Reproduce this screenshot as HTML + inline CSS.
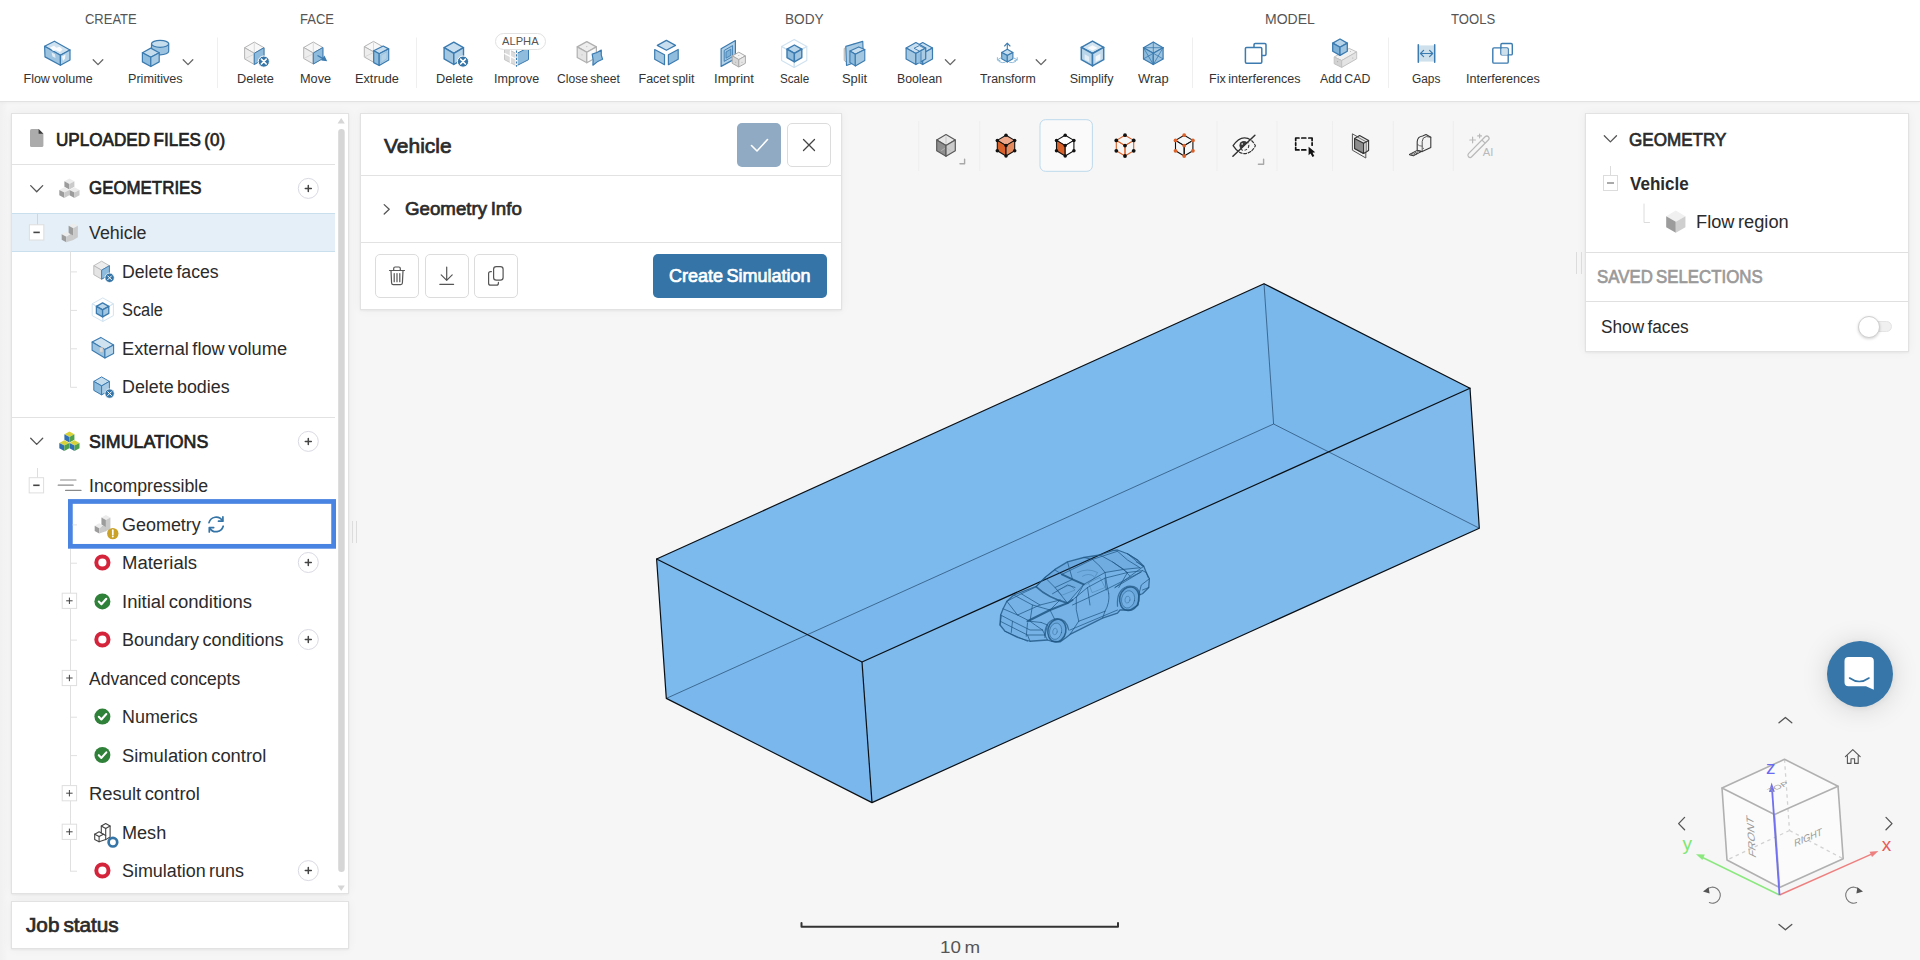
<!DOCTYPE html>
<html lang="en"><head><meta charset="utf-8"><title>SimScale Workbench</title>
<style>
*{box-sizing:border-box}
html,body{margin:0;padding:0}
body{width:1920px;height:960px;overflow:hidden;background:#f6f6f6;font-family:"Liberation Sans",sans-serif;position:relative;color:#2b2b2b}
.abs{position:absolute}
svg.lay{position:absolute;left:0;top:0;width:1920px;height:960px;overflow:visible;pointer-events:none}
.t{position:absolute;white-space:nowrap;transform-origin:0 50%;display:block;word-spacing:-.085em}
.panel{position:absolute;background:#fff;border:1px solid #e2e2e2;box-shadow:0 0 10px rgba(0,0,0,.045),0 1px 2px rgba(0,0,0,.05)}
</style></head><body>
<svg class="lay" viewBox="0 0 1920 960">
<polygon points="656.6,559 1264,283.7 1470,388.2 1479.3,528.2 872,802.6 666.3,698.4" fill="#7ebaec" stroke="none" stroke-width="1" stroke-linejoin="round" />
<polygon points="666.3,698.4 872,802.6 1479.3,528.2 1273.6,424" fill="rgba(100,170,236,0.16)" stroke="none" stroke-width="1" stroke-linejoin="round" />
<polygon points="1264,283.7 1470,388.2 1479.3,528.2 1273.6,424" fill="rgba(100,170,236,0.14)" stroke="none" stroke-width="1" stroke-linejoin="round" />
<polygon points="656.6,559 1264,283.7 1273.6,424 666.3,698.4" fill="rgba(100,170,236,0.06)" stroke="none" stroke-width="1" stroke-linejoin="round" />
<polygon points="862,662 1470,388.2 1479.3,528.2 872,802.6" fill="rgba(255,255,255,0.05)" stroke="none" stroke-width="1" stroke-linejoin="round" />
<line x1="1264" y1="283.7" x2="1273.6" y2="424" stroke="#1f4468" stroke-width="0.8" stroke-opacity="0.85"/>
<line x1="1273.6" y1="424" x2="666.3" y2="698.4" stroke="#1f4468" stroke-width="0.8" stroke-opacity="0.85"/>
<line x1="1273.6" y1="424" x2="1479.3" y2="528.2" stroke="#1f4468" stroke-width="0.8" stroke-opacity="0.85"/>
<polygon points="656.6,559 1264,283.7 1470,388.2 862,662" fill="none" stroke="#0a0f14" stroke-width="1.2" stroke-linejoin="round" />
<polyline points="656.6,559 666.3,698.4 872,802.6 1479.3,528.2 1470,388.2" fill="none" stroke="#0a0f14" stroke-width="1.2" stroke-linejoin="round" stroke-linecap="round" />
<line x1="862" y1="662" x2="872" y2="802.6" stroke="#0a0f14" stroke-width="1.2" />
<path d="M801.5 923 V926.7 H1118 V923" fill="none" stroke="#333" stroke-width="2" stroke-linejoin="round" stroke-linecap="round" stroke-linecap="butt" stroke-linejoin="miter"/>
<g stroke-linejoin="round" stroke-linecap="round">
<path d="M 1000 625 L 1000.62 615 L 1003.12 608.75 L 1006.88 601.25 L 1013.75 595 L 1036.25 586.25 L 1045 577.5 L 1055 569.38 L 1067.5 561.88 L 1083.75 557.5 L 1100 555 L 1112.5 550.62 L 1117.5 550 L 1127.5 553.75 L 1137.5 560 L 1143.75 566.25 L 1146.25 572.5 L 1149.38 578.75 L 1148.75 587.5 L 1142.5 593.75 L 1138.75 595 L 1138.12 605 L 1130 610 L 1120 610 L 1117.5 613.12 L 1102.5 618.12 L 1070 634.38 L 1066.25 637.5 L 1060 641.88 L 1051.25 641.25 L 1047.5 640 L 1030 641.25 L 1017.5 637.5 L 1005 631.25 Z" fill="rgba(40,105,170,0.10)" stroke="#1f5683" stroke-width="1.3" stroke-linejoin="round" stroke-linecap="round" stroke-opacity="0.8"/>
<path d="M 1036.25 586.88 L 1055 570 L 1067.5 562.5 L 1092.5 558.75 L 1117.5 551 L 1136.25 561.88 L 1140 568.12 L 1105 572.5 L 1083.75 584.38 L 1067.5 603.12 Z" fill="rgba(40,105,170,0.07)" stroke="none" stroke-width="0" stroke-linejoin="round" stroke-linecap="round" />
<path d="M 1027.5 621.25 L 1050 610 L 1067.5 603.12 L 1072.5 600" fill="none" stroke="#1f5683" stroke-width="2" stroke-linejoin="round" stroke-linecap="round" stroke-opacity="0.85"/>
<path d="M 1061.88 574.38 L 1072.5 579.38 L 1083.75 584.38" fill="none" stroke="#1f5683" stroke-width="1.9" stroke-linejoin="round" stroke-linecap="round" stroke-opacity="0.85"/>
<path d="M 1036.25 586.88 Q 1047.5 597.5 1067.5 603.12" fill="none" stroke="#1f5683" stroke-width="1.6" stroke-linejoin="round" stroke-linecap="round" stroke-opacity="0.8"/>
<path d="M 1003.12 608.75 L 1017.5 615 L 1030 621.25 L 1041.25 622.5" fill="none" stroke="#1f5683" stroke-width="1" stroke-linejoin="round" stroke-linecap="round" stroke-opacity="0.72"/>
<path d="M 1006.88 601.25 L 1021.25 593.75 L 1036.25 586.88" fill="none" stroke="#1f5683" stroke-width="1" stroke-linejoin="round" stroke-linecap="round" stroke-opacity="0.72"/>
<path d="M 1013.75 595 L 1032.5 605 L 1050 610" fill="none" stroke="#1f5683" stroke-width="1" stroke-linejoin="round" stroke-linecap="round" stroke-opacity="0.72"/>
<path d="M 1055 570 L 1061.88 574.38" fill="none" stroke="#1f5683" stroke-width="1" stroke-linejoin="round" stroke-linecap="round" stroke-opacity="0.72"/>
<path d="M 1083.75 584.38 L 1105 572.5 L 1123.75 569.38 L 1140 567.75" fill="none" stroke="#1f5683" stroke-width="1" stroke-linejoin="round" stroke-linecap="round" stroke-opacity="0.72"/>
<path d="M 1061.88 574.38 L 1092.5 559.38 L 1117.5 551.25" fill="none" stroke="#1f5683" stroke-width="1" stroke-linejoin="round" stroke-linecap="round" stroke-opacity="0.72"/>
<path d="M 1067.5 603.12 L 1083.75 584.38" fill="none" stroke="#1f5683" stroke-width="1" stroke-linejoin="round" stroke-linecap="round" stroke-opacity="0.72"/>
<path d="M 1072.5 600 L 1087.5 587.5 L 1105 578.12 L 1127.5 572.5 L 1142.5 570.62" fill="none" stroke="#1f5683" stroke-width="1" stroke-linejoin="round" stroke-linecap="round" stroke-opacity="0.72"/>
<path d="M 1072.5 605 L 1105 590 L 1141.25 571.88" fill="none" stroke="#1f5683" stroke-width="1" stroke-linejoin="round" stroke-linecap="round" stroke-opacity="0.72"/>
<path d="M 1076.25 597.5 Q 1075 610 1078.75 621.25" fill="none" stroke="#1f5683" stroke-width="1" stroke-linejoin="round" stroke-linecap="round" stroke-opacity="0.72"/>
<path d="M 1108.75 593.75 Q 1110 602.5 1105 611.25" fill="none" stroke="#1f5683" stroke-width="1" stroke-linejoin="round" stroke-linecap="round" stroke-opacity="0.72"/>
<path d="M 1078.75 621.25 L 1105 611.25" fill="none" stroke="#1f5683" stroke-width="1" stroke-linejoin="round" stroke-linecap="round" stroke-opacity="0.72"/>
<path d="M 1070 630 L 1117.5 610" fill="none" stroke="#1f5683" stroke-width="1" stroke-linejoin="round" stroke-linecap="round" stroke-opacity="0.72"/>
<path d="M 1105 572.5 Q 1106.25 582.5 1108.75 593.75" fill="none" stroke="#1f5683" stroke-width="1" stroke-linejoin="round" stroke-linecap="round" stroke-opacity="0.72"/>
<path d="M 1083.75 584.38 Q 1080 591.25 1076.25 597.5" fill="none" stroke="#1f5683" stroke-width="1" stroke-linejoin="round" stroke-linecap="round" stroke-opacity="0.72"/>
<path d="M 1117.5 551.25 L 1127.5 560 L 1140 567.75" fill="none" stroke="#1f5683" stroke-width="1" stroke-linejoin="round" stroke-linecap="round" stroke-opacity="0.72"/>
<path d="M 1127.5 553.75 L 1142.5 566.25" fill="none" stroke="#1f5683" stroke-width="1" stroke-linejoin="round" stroke-linecap="round" stroke-opacity="0.72"/>
<path d="M 1143.75 566.25 L 1130 576.25 L 1115 587.5" fill="none" stroke="#1f5683" stroke-width="1" stroke-linejoin="round" stroke-linecap="round" stroke-opacity="0.72"/>
<path d="M 1146.25 572.5 L 1148.12 577.5" fill="none" stroke="#1f5683" stroke-width="1" stroke-linejoin="round" stroke-linecap="round" stroke-opacity="0.72"/>
<path d="M 1000.62 615 L 1012.5 621.25 L 1030 630 L 1042.5 630" fill="none" stroke="#1f5683" stroke-width="1" stroke-linejoin="round" stroke-linecap="round" stroke-opacity="0.72"/>
<path d="M 1000.25 621.25 L 1027.5 635 L 1045 635" fill="none" stroke="#1f5683" stroke-width="1" stroke-linejoin="round" stroke-linecap="round" stroke-opacity="0.72"/>
<path d="M 1012.5 621.25 L 1011.25 632.5" fill="none" stroke="#1f5683" stroke-width="1" stroke-linejoin="round" stroke-linecap="round" stroke-opacity="0.72"/>
<path d="M 1027.5 623.12 L 1026.25 636.25" fill="none" stroke="#1f5683" stroke-width="1" stroke-linejoin="round" stroke-linecap="round" stroke-opacity="0.72"/>
<path d="M 1030 621.25 Q 1035 625 1042.5 630" fill="none" stroke="#1f5683" stroke-width="1" stroke-linejoin="round" stroke-linecap="round" stroke-opacity="0.72"/>
<path d="M 1041.25 622.5 L 1047.5 625" fill="none" stroke="#1f5683" stroke-width="1" stroke-linejoin="round" stroke-linecap="round" stroke-opacity="0.72"/>
<path d="M 1045 577.5 L 1055 587.5 L 1067.5 603.12" fill="none" stroke="#1f5683" stroke-width="1" stroke-linejoin="round" stroke-linecap="round" stroke-opacity="0.72"/>
<path d="M 1052.5 593.75 L 1067.5 585 L 1075 587.5" fill="none" stroke="#1f5683" stroke-width="1" stroke-linejoin="round" stroke-linecap="round" stroke-opacity="0.72"/>
<path d="M 1055 587.5 L 1072.5 579.38" fill="none" stroke="#1f5683" stroke-width="1" stroke-linejoin="round" stroke-linecap="round" stroke-opacity="0.72"/>
<path d="M 1092.5 559.38 L 1100 566.25 L 1105 572.5" fill="none" stroke="#1f5683" stroke-width="1" stroke-linejoin="round" stroke-linecap="round" stroke-opacity="0.72"/>
<path d="M 1100 555 L 1112.5 561.88 L 1123.75 569.38" fill="none" stroke="#1f5683" stroke-width="1" stroke-linejoin="round" stroke-linecap="round" stroke-opacity="0.72"/>
<path d="M 1149.38 578.75 L 1141.25 585 L 1138.75 595" fill="none" stroke="#1f5683" stroke-width="1" stroke-linejoin="round" stroke-linecap="round" stroke-opacity="0.72"/>
<path d="M 1148.75 587.5 L 1142.5 590" fill="none" stroke="#1f5683" stroke-width="1" stroke-linejoin="round" stroke-linecap="round" stroke-opacity="0.72"/>
<path d="M 1087.5 587.5 L 1090 605" fill="none" stroke="#1f5683" stroke-width="1" stroke-linejoin="round" stroke-linecap="round" stroke-opacity="0.72"/>
<path d="M 1127.5 572.5 L 1118.75 587.5" fill="none" stroke="#1f5683" stroke-width="1" stroke-linejoin="round" stroke-linecap="round" stroke-opacity="0.72"/>
<path d="M 1017.5 615 L 1040 605 L 1060 600" fill="none" stroke="#1f5683" stroke-width="1" stroke-linejoin="round" stroke-linecap="round" stroke-opacity="0.72"/>
<path d="M 1021.25 593.75 L 1040 605" fill="none" stroke="#1f5683" stroke-width="1" stroke-linejoin="round" stroke-linecap="round" stroke-opacity="0.72"/>
<path d="M 1006.88 601.25 L 1017.5 615" fill="none" stroke="#1f5683" stroke-width="1" stroke-linejoin="round" stroke-linecap="round" stroke-opacity="0.72"/>
<path d="M 1032.5 605 L 1030 621.25" fill="none" stroke="#1f5683" stroke-width="1" stroke-linejoin="round" stroke-linecap="round" stroke-opacity="0.72"/>
<path d="M 1050 610 L 1055 620" fill="none" stroke="#1f5683" stroke-width="1" stroke-linejoin="round" stroke-linecap="round" stroke-opacity="0.72"/>
<path d="M 1060 600 L 1050 610" fill="none" stroke="#1f5683" stroke-width="1" stroke-linejoin="round" stroke-linecap="round" stroke-opacity="0.72"/>
<path d="M 1105 578.12 L 1106.25 590" fill="none" stroke="#1f5683" stroke-width="1" stroke-linejoin="round" stroke-linecap="round" stroke-opacity="0.72"/>
<path d="M 1123.75 569.38 L 1130 576.25" fill="none" stroke="#1f5683" stroke-width="1" stroke-linejoin="round" stroke-linecap="round" stroke-opacity="0.72"/>
<path d="M 1112.5 561.88 L 1127.5 572.5" fill="none" stroke="#1f5683" stroke-width="1" stroke-linejoin="round" stroke-linecap="round" stroke-opacity="0.72"/>
<path d="M 1136.25 561.88 L 1143.75 566.25" fill="none" stroke="#1f5683" stroke-width="1" stroke-linejoin="round" stroke-linecap="round" stroke-opacity="0.72"/>
<path d="M 1137.5 560 L 1127.5 553.75" fill="none" stroke="#1f5683" stroke-width="1" stroke-linejoin="round" stroke-linecap="round" stroke-opacity="0.72"/>
<path d="M 1142.5 570.62 L 1146.25 572.5" fill="none" stroke="#1f5683" stroke-width="1" stroke-linejoin="round" stroke-linecap="round" stroke-opacity="0.72"/>
<path d="M 1115 587.5 L 1141.25 571.88" fill="none" stroke="#1f5683" stroke-width="1" stroke-linejoin="round" stroke-linecap="round" stroke-opacity="0.72"/>
<path d="M 1102.5 618.12 L 1105 611.25" fill="none" stroke="#1f5683" stroke-width="1" stroke-linejoin="round" stroke-linecap="round" stroke-opacity="0.72"/>
<path d="M 1070 634.38 L 1078.75 621.25" fill="none" stroke="#1f5683" stroke-width="1" stroke-linejoin="round" stroke-linecap="round" stroke-opacity="0.72"/>
<path d="M 1047.5 625 L 1045 635" fill="none" stroke="#1f5683" stroke-width="1" stroke-linejoin="round" stroke-linecap="round" stroke-opacity="0.72"/>
<path d="M 1001.25 616.25 L 1000 625" fill="none" stroke="#1f5683" stroke-width="1" stroke-linejoin="round" stroke-linecap="round" stroke-opacity="0.72"/>
<path d="M 1005 631.25 L 1027.5 641.25" fill="none" stroke="#1f5683" stroke-width="1" stroke-linejoin="round" stroke-linecap="round" stroke-opacity="0.72"/>
<path d="M 1030 641.25 L 1027.5 635" fill="none" stroke="#1f5683" stroke-width="1" stroke-linejoin="round" stroke-linecap="round" stroke-opacity="0.72"/>
<path d="M 1042.5 630 L 1045 635 L 1047.5 640" fill="none" stroke="#1f5683" stroke-width="1" stroke-linejoin="round" stroke-linecap="round" stroke-opacity="0.72"/>
<path d="M 1067.5 561.88 L 1072.5 579.38" fill="none" stroke="#1f5683" stroke-width="1" stroke-linejoin="round" stroke-linecap="round" stroke-opacity="0.72"/>
<path d="M 1083.75 557.5 L 1092.5 559.38" fill="none" stroke="#1f5683" stroke-width="1" stroke-linejoin="round" stroke-linecap="round" stroke-opacity="0.72"/>
<path d="M 1055 569.38 L 1045 577.5 L 1036.25 586.88" fill="none" stroke="#1f5683" stroke-width="1" stroke-linejoin="round" stroke-linecap="round" stroke-opacity="0.72"/>
<ellipse cx="1056.88" cy="630.62" rx="9" ry="11.5" transform="rotate(12 1056.88 630.62)" fill="rgba(40,105,170,0.15)" stroke="#1f5683" stroke-width="1.5" stroke-opacity="0.85"/>
<ellipse cx="1055.62" cy="631.25" rx="6" ry="8.25" transform="rotate(12 1055.62 631.25)" fill="rgba(126,186,236,0.5)" stroke="#1f5683" stroke-width="0.8" stroke-opacity="0.6"/>
<ellipse cx="1055" cy="631.5" rx="2.25" ry="3.25" transform="rotate(12 1055 631.5)" fill="none" stroke="#1f5683" stroke-width="0.7" stroke-opacity="0.5"/>
<ellipse cx="1129.38" cy="598.75" rx="9.75" ry="11.88" transform="rotate(12 1129.38 598.75)" fill="rgba(40,105,170,0.15)" stroke="#1f5683" stroke-width="1.5" stroke-opacity="0.85"/>
<ellipse cx="1128.12" cy="599.38" rx="6.5" ry="8.75" transform="rotate(12 1128.12 599.38)" fill="rgba(126,186,236,0.5)" stroke="#1f5683" stroke-width="0.8" stroke-opacity="0.6"/>
<ellipse cx="1127.5" cy="599.62" rx="2.5" ry="3.5" transform="rotate(12 1127.5 599.62)" fill="none" stroke="#1f5683" stroke-width="0.7" stroke-opacity="0.5"/>
<path d="M 1045 637.5 Q 1043.75 622.5 1055 618.75 Q 1066.25 617.5 1068.75 630" fill="none" stroke="#1f5683" stroke-width="1.2" stroke-linejoin="round" stroke-linecap="round" stroke-opacity="0.7"/>
<path d="M 1117.5 606.25 Q 1116.25 590 1127.5 586.25 Q 1138.75 585 1140 595" fill="none" stroke="#1f5683" stroke-width="1.2" stroke-linejoin="round" stroke-linecap="round" stroke-opacity="0.7"/>
<path d="M 1077.5 572.5 Q 1087.5 567.5 1097.5 572.5 Q 1092.5 582.5 1085 585" fill="none" stroke="#1f5683" stroke-width="0.7" stroke-linejoin="round" stroke-linecap="round" stroke-opacity="0.4"/>
<path d="M 1082.5 576.25 Q 1088.75 572.5 1093.75 576.25" fill="none" stroke="#1f5683" stroke-width="0.7" stroke-linejoin="round" stroke-linecap="round" stroke-opacity="0.4"/>
<path d="M 1088.75 582.5 L 1100 577.5 L 1105 587.5 L 1092.5 592.5 Z" fill="none" stroke="#1f5683" stroke-width="0.7" stroke-linejoin="round" stroke-linecap="round" stroke-opacity="0.4"/>
<path d="M 1057.5 590 L 1070 585 L 1075 590 L 1062.5 595 Z" fill="none" stroke="#1f5683" stroke-width="0.7" stroke-linejoin="round" stroke-linecap="round" stroke-opacity="0.4"/>
</g>
<polygon points="1784.5,759.3 1838,786.3 1843.2,858.8 1779.5,887.5 1727,860 1722,788" fill="#fbfbfb" stroke="none" stroke-width="0" stroke-linejoin="round" />
<line x1="1784.5" y1="759.3" x2="1789.5" y2="830.5" stroke="#d2d2d2" stroke-width="1.3" stroke-dasharray="3.5 3.5"/>
<line x1="1789.5" y1="830.5" x2="1727" y2="860" stroke="#d2d2d2" stroke-width="1.3" stroke-dasharray="3.5 3.5"/>
<line x1="1789.5" y1="830.5" x2="1843.2" y2="858.8" stroke="#d2d2d2" stroke-width="1.3" stroke-dasharray="3.5 3.5"/>
<polygon points="1784.5,759.3 1838,786.3 1774.5,814.5 1722,788" fill="none" stroke="#b0b0b0" stroke-width="1.6" stroke-linejoin="round" />
<polyline points="1722,788 1727,860 1779.5,887.5 1843.2,858.8 1838,786.3" fill="none" stroke="#b0b0b0" stroke-width="1.6" stroke-linejoin="round" stroke-linecap="round" />
<line x1="1774.5" y1="814.5" x2="1779.5" y2="887.5" stroke="#b0b0b0" stroke-width="1.6" />
<line x1="1779.5" y1="895" x2="1875" y2="852.7" stroke="#ee7f7f" stroke-width="1.4" />
<polygon points="1878.4,851 1869.6,851.8 1872,857" fill="#ee7f7f" stroke="none" stroke-width="1" stroke-linejoin="round" />
<line x1="1779.5" y1="895" x2="1699.5" y2="856" stroke="#8be87f" stroke-width="1.4" />
<polygon points="1696,854.2 1704.8,854.6 1702.4,860" fill="#8be87f" stroke="none" stroke-width="1" stroke-linejoin="round" />
<line x1="1779.5" y1="895" x2="1771.9" y2="787" stroke="#7070f0" stroke-width="1.8" />
<polygon points="1771.6,782.6 1769,792 1774.8,791.7" fill="#7070f0" stroke="none" stroke-width="1" stroke-linejoin="round" />
<text x="1881.8" y="851.4" font-size="19" fill="#e85a5a" font-family="Liberation Sans,sans-serif">x</text>
<text x="1682.6" y="850" font-size="19" fill="#7ee66f" font-family="Liberation Sans,sans-serif">y</text>
<text x="1766" y="774.4" font-size="19" fill="#6a6af2" font-family="Liberation Sans,sans-serif">z</text>
<text x="0" y="0" font-size="10" fill="#9a9a9a" font-family="Liberation Sans,sans-serif" transform="matrix(-0.076,-1.177,1.02,0.5,1756,858.6)">FRONT</text>
<text x="0" y="0" font-size="10" fill="#9a9a9a" font-family="Liberation Sans,sans-serif" transform="matrix(0.9,-0.39,0.05,1.02,1794.4,846.9)">RIGHT</text>
<text x="0" y="0" font-size="10" fill="#9a9a9a" font-family="Liberation Sans,sans-serif" transform="matrix(0.95,-0.42,0.5,0.5,1770,793)">TOP</text>
<polyline points="1779,722.8 1785.4,717.4 1791.8,722.8" fill="none" stroke="#555" stroke-width="1.3" stroke-linejoin="round" stroke-linecap="round" />
<polyline points="1779,924.4 1785.4,929.8 1791.8,924.4" fill="none" stroke="#555" stroke-width="1.3" stroke-linejoin="round" stroke-linecap="round" />
<polyline points="1684.6,817.4 1678.6,823.6 1684.6,829.8" fill="none" stroke="#555" stroke-width="1.3" stroke-linejoin="round" stroke-linecap="round" />
<polyline points="1886,817.4 1892,823.6 1886,829.8" fill="none" stroke="#555" stroke-width="1.3" stroke-linejoin="round" stroke-linecap="round" />
<path d="M1845.4 756.6 L1852.8 749.6 L1860.2 756.6 M1847.4 755.4 V763.4 H1851 V758.8 H1854.6 V763.4 H1858.2 V755.4" fill="none" stroke="#555" stroke-width="1.1" stroke-linejoin="round" stroke-linecap="round" />
<path d="M1706.6 889.6 A8 8 0 1 1 1709.4 902.6" fill="none" stroke="#777" stroke-width="1.1" stroke-linejoin="round" stroke-linecap="round" />
<polygon points="1703,891.4 1708.6,887.2 1709.6,893.4" fill="#555" stroke="none" stroke-width="1" stroke-linejoin="round" />
<path d="M1859.4 889.6 A8 8 0 1 0 1856.6 902.6" fill="none" stroke="#777" stroke-width="1.1" stroke-linejoin="round" stroke-linecap="round" />
<polygon points="1863,891.4 1857.4,887.2 1856.4,893.4" fill="#555" stroke="none" stroke-width="1" stroke-linejoin="round" />
</svg>
<div class="abs" style="left:0;top:0;width:1920px;height:102px;background:#fff;border-bottom:1px solid #e2e2e2;box-shadow:0 1px 3px rgba(0,0,0,.035)"></div>
<div class="abs" style="left:0;top:102px;width:8px;height:858px;background:linear-gradient(90deg,rgba(0,0,0,.025),rgba(0,0,0,0))"></div>
<div class="panel" style="left:11px;top:113px;width:338px;height:781px"></div>
<div class="panel" style="left:11px;top:901px;width:338px;height:48px"></div>
<div class="panel" style="left:360px;top:113px;width:482px;height:197px;"><div class="abs" style="left:0;right:0;top:61px;height:1px;background:#e2e2e2"></div><div class="abs" style="left:0;right:0;top:128px;height:1px;background:#e2e2e2"></div></div>
<div class="abs" style="left:737px;top:123px;width:44px;height:44px;border-radius:5px;background:#8faac2"></div>
<div class="abs" style="left:787px;top:123px;width:44px;height:44px;border-radius:5px;background:#fff;border:1px solid #dcdcdc"></div>
<div class="abs" style="left:375px;top:254px;width:44px;height:44px;border-radius:5px;background:#fff;border:1px solid #dcdcdc"></div>
<div class="abs" style="left:425px;top:254px;width:44px;height:44px;border-radius:5px;background:#fff;border:1px solid #dcdcdc"></div>
<div class="abs" style="left:474px;top:254px;width:44px;height:44px;border-radius:5px;background:#fff;border:1px solid #dcdcdc"></div>
<div class="abs" style="left:653px;top:254px;width:174px;height:44px;border-radius:5px;background:#3474a6"></div>
<div class="panel" style="left:1585px;top:113px;width:324px;height:239px"><div class="abs" style="left:0;right:0;top:138px;height:1px;background:#e0e0e0"></div><div class="abs" style="left:0;right:0;top:187px;height:1px;background:#e0e0e0"></div></div>
<div class="abs" style="left:1866px;top:321px;width:26px;height:11px;border-radius:6px;background:#f0f0f0;border:1px solid #e4e4e4"></div>
<div class="abs" style="left:1858px;top:316px;width:22px;height:22px;border-radius:11px;background:#fff;border:1px solid #cfcfcf;box-shadow:0 1px 3px rgba(0,0,0,.18)"></div>
<div class="abs" style="left:1827px;top:641px;width:66px;height:66px;border-radius:33px;background:#3676a8;box-shadow:0 1px 6px rgba(0,0,0,.06),0 2px 28px rgba(0,0,0,.14)"></div>
<div class="abs" style="left:12px;top:163.9px;width:323px;height:1px;background:#e2e2e2"></div>
<div class="abs" style="left:12px;top:416.5px;width:323px;height:1px;background:#e2e2e2"></div>
<div class="abs" style="left:12px;top:213px;width:323px;height:38.5px;background:#e4eff7;border-top:1px solid #c9dfee;border-bottom:1px solid #c9dfee"></div>
<svg class="lay" viewBox="0 0 1920 960" style="font-family:'Liberation Sans',sans-serif">
<line x1="918.7" y1="121" x2="918.7" y2="171" stroke="#eeeeee" stroke-width="1" />
<line x1="979.7" y1="121" x2="979.7" y2="171" stroke="#eeeeee" stroke-width="1" />
<line x1="1217" y1="121" x2="1217" y2="171" stroke="#eeeeee" stroke-width="1" />
<line x1="1277" y1="121" x2="1277" y2="171" stroke="#eeeeee" stroke-width="1" />
<line x1="1332.5" y1="121" x2="1332.5" y2="171" stroke="#eeeeee" stroke-width="1" />
<line x1="1393.3" y1="121" x2="1393.3" y2="171" stroke="#eeeeee" stroke-width="1" />
<line x1="1453.3" y1="121" x2="1453.3" y2="171" stroke="#eeeeee" stroke-width="1" />
<rect x="1040" y="119.7" width="52.4" height="51.6" rx="5.5" fill="#fafafa" stroke="#bcd9ec" stroke-width="1" />
<polygon points="946,134.5 955.3,139.95 946,145.4 936.7,139.95" fill="#e8e8e8" stroke="#5a5a5a" stroke-width="1.2" stroke-linejoin="round" /><polygon points="936.7,139.95 946,145.4 946,156.3 936.7,150.85" fill="#8f8f8f" stroke="#5a5a5a" stroke-width="1.2" stroke-linejoin="round" /><polygon points="946,145.4 955.3,139.95 955.3,150.85 946,156.3" fill="#cbcbcb" stroke="#5a5a5a" stroke-width="1.2" stroke-linejoin="round" />
<path d="M946 137 V143 M941.5 150.5 L944.5 148.6 M950.5 150.5 L947.5 148.6" fill="none" stroke="#bbb" stroke-width="0.8" stroke-linejoin="round" stroke-linecap="round" />
<polyline points="964.6,159.2 964.6,163.8 960,163.8" fill="none" stroke="#a8a8a8" stroke-width="1.4" stroke-linejoin="round" stroke-linecap="round" stroke-linecap="butt" stroke-linejoin="miter"/>
<polygon points="1006,135.2 1014.7,140.4 1006,145.6 997.3,140.4" fill="#efa98a" stroke="#111" stroke-width="1.1" stroke-linejoin="round" /><polygon points="997.3,140.4 1006,145.6 1006,156 997.3,150.8" fill="#d9622b" stroke="#111" stroke-width="1.1" stroke-linejoin="round" /><polygon points="1006,145.6 1014.7,140.4 1014.7,150.8 1006,156" fill="#e58a5c" stroke="#111" stroke-width="1.1" stroke-linejoin="round" />
<circle cx="1006" cy="135.2" r="1.75" fill="#111" stroke="none" stroke-width="1" /><circle cx="997.3" cy="140.4" r="1.75" fill="#111" stroke="none" stroke-width="1" /><circle cx="1014.7" cy="140.4" r="1.75" fill="#111" stroke="none" stroke-width="1" /><circle cx="1006" cy="145.6" r="1.75" fill="#111" stroke="none" stroke-width="1" /><circle cx="997.3" cy="150.8" r="1.75" fill="#111" stroke="none" stroke-width="1" /><circle cx="1014.7" cy="150.8" r="1.75" fill="#111" stroke="none" stroke-width="1" /><circle cx="1006" cy="156" r="1.75" fill="#111" stroke="none" stroke-width="1" />
<polygon points="1065.2,135.2 1073.9,140.4 1065.2,145.6 1056.5,140.4" fill="#fff" stroke="#111" stroke-width="1.1" stroke-linejoin="round" /><polygon points="1056.5,140.4 1065.2,145.6 1065.2,156 1056.5,150.8" fill="#d9622b" stroke="#111" stroke-width="1.1" stroke-linejoin="round" /><polygon points="1065.2,145.6 1073.9,140.4 1073.9,150.8 1065.2,156" fill="#fff" stroke="#111" stroke-width="1.1" stroke-linejoin="round" />
<circle cx="1065.2" cy="135.2" r="1.75" fill="#111" stroke="none" stroke-width="1" /><circle cx="1056.5" cy="140.4" r="1.75" fill="#111" stroke="none" stroke-width="1" /><circle cx="1073.9" cy="140.4" r="1.75" fill="#111" stroke="none" stroke-width="1" /><circle cx="1065.2" cy="145.6" r="1.75" fill="#111" stroke="none" stroke-width="1" /><circle cx="1056.5" cy="150.8" r="1.75" fill="#111" stroke="none" stroke-width="1" /><circle cx="1073.9" cy="150.8" r="1.75" fill="#111" stroke="none" stroke-width="1" /><circle cx="1065.2" cy="156" r="1.75" fill="#111" stroke="none" stroke-width="1" />
<polygon points="1125,135.2 1133.7,140.4 1125,145.6 1116.3,140.4" fill="none" stroke="#d9622b" stroke-width="1.1" stroke-linejoin="round" /><polygon points="1116.3,140.4 1125,145.6 1125,156 1116.3,150.8" fill="none" stroke="#d9622b" stroke-width="1.1" stroke-linejoin="round" /><polygon points="1125,145.6 1133.7,140.4 1133.7,150.8 1125,156" fill="none" stroke="#d9622b" stroke-width="1.1" stroke-linejoin="round" />
<circle cx="1125" cy="135.2" r="1.9" fill="#111" stroke="none" stroke-width="1" /><circle cx="1116.3" cy="140.4" r="1.9" fill="#111" stroke="none" stroke-width="1" /><circle cx="1133.7" cy="140.4" r="1.9" fill="#111" stroke="none" stroke-width="1" /><circle cx="1125" cy="145.6" r="1.9" fill="#111" stroke="none" stroke-width="1" /><circle cx="1116.3" cy="150.8" r="1.9" fill="#111" stroke="none" stroke-width="1" /><circle cx="1133.7" cy="150.8" r="1.9" fill="#111" stroke="none" stroke-width="1" /><circle cx="1125" cy="156" r="1.9" fill="#111" stroke="none" stroke-width="1" />
<polygon points="1184.2,135.2 1192.9,140.4 1184.2,145.6 1175.5,140.4" fill="none" stroke="#111" stroke-width="1.1" stroke-linejoin="round" /><polygon points="1175.5,140.4 1184.2,145.6 1184.2,156 1175.5,150.8" fill="none" stroke="#111" stroke-width="1.1" stroke-linejoin="round" /><polygon points="1184.2,145.6 1192.9,140.4 1192.9,150.8 1184.2,156" fill="none" stroke="#111" stroke-width="1.1" stroke-linejoin="round" />
<circle cx="1184.2" cy="135.2" r="1.9" fill="#d9622b" stroke="none" stroke-width="1" /><circle cx="1175.5" cy="140.4" r="1.9" fill="#d9622b" stroke="none" stroke-width="1" /><circle cx="1192.9" cy="140.4" r="1.9" fill="#d9622b" stroke="none" stroke-width="1" /><circle cx="1184.2" cy="145.6" r="1.9" fill="#d9622b" stroke="none" stroke-width="1" /><circle cx="1175.5" cy="150.8" r="1.9" fill="#d9622b" stroke="none" stroke-width="1" /><circle cx="1192.9" cy="150.8" r="1.9" fill="#d9622b" stroke="none" stroke-width="1" /><circle cx="1184.2" cy="156" r="1.9" fill="#d9622b" stroke="none" stroke-width="1" />
<clipPath id="eyeL"><polygon points="1225,128 1262.8,128 1230.6,158.6 1225,158.6"/></clipPath>
<clipPath id="eyeR"><polygon points="1262.8,128 1270,128 1270,170 1225,170 1225,164 "/></clipPath>
<g clip-path="url(#eyeL)"><path d="M1233.1 145.7 Q1238.4 137.6 1244.6 137.8 Q1251.4 138 1255.4 145.7 Q1251.4 153.4 1244.6 153.6 Q1238.4 153.6 1233.1 145.7 Z" fill="none" stroke="#333" stroke-width="1.3" stroke-linejoin="round" stroke-linecap="round" /><circle cx="1243.9" cy="145.4" r="4.5" fill="#3a3a3a" stroke="none" stroke-width="1" /><circle cx="1242.2" cy="143.9" r="0.9" fill="#cfcfcf" stroke="none" stroke-width="1" /></g>
<g clip-path="url(#eyeR)"><path d="M1233.1 145.7 Q1238.4 137.6 1244.6 137.8 Q1251.4 138 1255.4 145.7 Q1251.4 153.4 1244.6 153.6 Q1238.4 153.6 1233.1 145.7 Z" fill="none" stroke="#333" stroke-width="1.15" stroke-linejoin="round" stroke-linecap="round" stroke-dasharray="2.8 1.7"/><circle cx="1243.9" cy="145.4" r="4.9" fill="none" stroke="#333" stroke-width="1.1" stroke-dasharray="2.6 1.6"/></g>
<line x1="1232.9" y1="156.3" x2="1254.9" y2="135.3" stroke="#333" stroke-width="1.5" stroke-linecap="round"/>
<polyline points="1263.6,159.3 1263.6,164.2 1258.4,164.2" fill="none" stroke="#a8a8a8" stroke-width="1.4" stroke-linejoin="round" stroke-linecap="round" stroke-linecap="butt" stroke-linejoin="miter"/>
<path d="M1295.7 140.6 V138 H1299 M1301.8 138 H1305.8 M1308.8 138 H1312.1 V140.6 M1312.1 142.8 V145.2 M1295.7 142.8 V145.2 M1295.7 147.4 V149.9 H1299 M1301.8 149.9 H1305.8" fill="none" stroke="#111" stroke-width="1.7" stroke-linejoin="round" stroke-linecap="round" stroke-linecap="butt" stroke-linejoin="miter"/>
<polygon points="1308.6,146.7 1308.6,155.2 1310.5,153.5 1312.5,157 1314.3,156 1312.5,152.7 1315.2,152.2" fill="#111" stroke="none" stroke-width="1" stroke-linejoin="round" />
<polygon points="1352.4,133.8 1365.8,141.6 1365.8,158 1352.4,150.2" fill="#f0f0f0" stroke="#555" stroke-width="1" stroke-linejoin="round" />
<polygon points="1354.6,138.4 1359.6,135.6 1368.6,140.4 1368.6,150.6 1363.6,153.4 1354.6,148.6" fill="#e4e4e4" stroke="#333" stroke-width="1.1" stroke-linejoin="round" />
<polygon points="1354.6,138.4 1363.6,143.2 1363.6,153.4 1354.6,148.6" fill="#8d8d8d" stroke="#333" stroke-width="1.1" stroke-linejoin="round" />
<polyline points="1363.6,143.2 1368.6,140.4" fill="none" stroke="#333" stroke-width="1.1" stroke-linejoin="round" stroke-linecap="round" />
<polyline points="1357.4,137 1366.2,141.8 1366.2,152" fill="none" stroke="#555" stroke-width="0.8" stroke-linejoin="round" stroke-linecap="round" />
<path d="M1417.2 150.4 V141.6 Q1417.6 136.6 1422.6 136 L1426 134.6 L1430.8 137.2 V147.6 L1422.2 151.6 L1417.2 150.4" fill="#f4f4f4" stroke="#3a3a3a" stroke-width="1.1" stroke-linejoin="round" stroke-linecap="round" />
<path d="M1422.2 151.6 V141.4 Q1422.4 137 1426.4 136.6 L1430.8 137.2" fill="none" stroke="#444" stroke-width="0.9" stroke-linejoin="round" stroke-linecap="round" />
<path d="M1417.4 144.4 Q1419.6 146.4 1422 146.2" fill="none" stroke="#555" stroke-width="0.8" stroke-linejoin="round" stroke-linecap="round" />
<circle cx="1423.4" cy="148.2" r="0.5" fill="#333" stroke="none" stroke-width="1" />
<polygon points="1409,154.6 1416.8,150.6 1421.4,151.6 1413.4,155.8" fill="#ddd" stroke="#333" stroke-width="1" stroke-linejoin="round" />
<path d="M1411.4 155 L1413 153.4 M1413.6 155.4 L1415.4 152.4 M1416 154.4 L1417.4 151.9" fill="none" stroke="#333" stroke-width="0.8" stroke-linejoin="round" stroke-linecap="round" />
<g transform="translate(-1.5,-1.6)">
<path d="M1470 155.2 L1486.6 138.4 Q1488.4 136.8 1490 138.4 Q1491.4 140 1489.8 141.6 L1473.2 158.4 Q1471.6 160 1470 158.4 Q1468.6 156.8 1470 155.2 Z" fill="none" stroke="#b9b9b9" stroke-width="1.25" stroke-linejoin="round" stroke-linecap="round" />
<line x1="1483.4" y1="141.6" x2="1486.6" y2="144.8" stroke="#b9b9b9" stroke-width="1.1" />
</g>
<path d="M1472.6 137.2 V142.8 M1469.8 140 H1475.4 M1479.6 134 V137.8 M1477.7 135.9 H1481.5" fill="none" stroke="#b9b9b9" stroke-width="1.2" stroke-linejoin="round" stroke-linecap="round" />
<text x="1482.8" y="155.6" font-size="10.5" fill="#b9b9b9" textLength="10.6" lengthAdjust="spacingAndGlyphs">AI</text>
<polyline points="384.2,204.6 389.2,209.3 384.2,214" fill="none" stroke="#555" stroke-width="1.3" stroke-linejoin="round" stroke-linecap="round" />
<polyline points="751.5,145.5 757,151 767.5,139.5" fill="none" stroke="#fff" stroke-width="1.6" stroke-linejoin="round" stroke-linecap="round" />
<path d="M803.5 139.5 L814.5 150.5 M814.5 139.5 L803.5 150.5" fill="none" stroke="#444" stroke-width="1.3" stroke-linejoin="round" stroke-linecap="round" />
<path d="M389.5 270.5 H404.5 M393.7 270.3 V268.4 Q393.7 267 395.1 267 H398.9 Q400.3 267 400.3 268.4 V270.3 M391 270.7 L391.6 283 Q391.7 284.6 393.3 284.6 H400.7 Q402.3 284.6 402.4 283 L403 270.7 M394.2 273.5 V281.7 M397 273.5 V281.7 M399.8 273.5 V281.7" fill="none" stroke="#555" stroke-width="1.2" stroke-linejoin="round" stroke-linecap="round" />
<path d="M446.7 267 V280 M441.2 274.8 L446.7 280.3 L452.2 274.8 M439.8 284.3 H453.6" fill="none" stroke="#555" stroke-width="1.2" stroke-linejoin="round" stroke-linecap="round" />
<path d="M493.6 269.3 Q493.6 266.6 496.3 266.6 H500.4 Q503.1 266.6 503.1 269.3 V277.4 Q503.1 280.1 500.4 280.1 H496.3 Q493.6 280.1 493.6 277.4 Z" fill="none" stroke="#555" stroke-width="1.2" stroke-linejoin="round" stroke-linecap="round" />
<path d="M491.4 271.6 H490.6 Q488.6 271.6 488.6 273.6 V283.2 Q488.6 285.2 490.6 285.2 H496.4 Q498.4 285.2 498.4 283.2 V282.4" fill="none" stroke="#555" stroke-width="1.2" stroke-linejoin="round" stroke-linecap="round" />
<polyline points="1604.3,135.8 1610.4,141.9 1616.5,135.8" fill="none" stroke="#555" stroke-width="1.3" stroke-linejoin="round" stroke-linecap="round" />
<line x1="1610.5" y1="166" x2="1610.5" y2="175.5" stroke="#dcdcdc" stroke-width="1" />
<rect x="1603.5" y="175.5" width="14" height="15" rx="0" fill="#fff" stroke="#dcdcdc" stroke-width="1" />
<line x1="1607" y1="183" x2="1614" y2="183" stroke="#555" stroke-width="1" />
<polyline points="1644,204 1644,222.5 1649.5,222.5" fill="none" stroke="#dcdcdc" stroke-width="1" stroke-linejoin="round" stroke-linecap="round" stroke-linecap="butt"/>
<polygon points="1675.8,210.6 1685.41,216.15 1675.8,221.7 1666.19,216.15" fill="#f0f0f0" stroke="none" stroke-width="0" stroke-linejoin="round" /><polygon points="1666.19,216.15 1675.8,221.7 1675.8,232.8 1666.19,227.25" fill="#9c9c9c" stroke="none" stroke-width="0" stroke-linejoin="round" /><polygon points="1675.8,221.7 1685.41,216.15 1685.41,227.25 1675.8,232.8" fill="#cfcfcf" stroke="none" stroke-width="0" stroke-linejoin="round" />
<line x1="1576.5" y1="252" x2="1576.5" y2="274" stroke="#dcdcdc" stroke-width="1" />
<line x1="1581.5" y1="252" x2="1581.5" y2="274" stroke="#dcdcdc" stroke-width="1" />
<line x1="352.5" y1="521" x2="352.5" y2="543" stroke="#dcdcdc" stroke-width="1" />
<line x1="356.5" y1="521" x2="356.5" y2="543" stroke="#dcdcdc" stroke-width="1" />
<path d="M1848.5 657 H1869.8 Q1873.8 657 1873.8 661 V689.8 L1866 686.2 H1848.5 Q1844.5 686.2 1844.5 682.2 V661 Q1844.5 657 1848.5 657 Z" fill="#fff" stroke="none" stroke-width="0" stroke-linejoin="round" stroke-linecap="round" />
<path d="M1849.6 678 Q1859.3 685 1869 678" fill="none" stroke="#3474a6" stroke-width="1.6" stroke-linejoin="round" stroke-linecap="round" />
<line x1="217.5" y1="37.5" x2="217.5" y2="88" stroke="#efefef" stroke-width="1" />
<line x1="416.5" y1="37.5" x2="416.5" y2="88" stroke="#efefef" stroke-width="1" />
<line x1="1192.5" y1="37.5" x2="1192.5" y2="88" stroke="#efefef" stroke-width="1" />
<line x1="1388.5" y1="37.5" x2="1388.5" y2="88" stroke="#efefef" stroke-width="1" />
<polyline points="93.2,59.8 98,64.6 102.8,59.8" fill="none" stroke="#666" stroke-width="1.3" stroke-linejoin="round" stroke-linecap="round" />
<polyline points="183.2,59.8 188,64.6 192.8,59.8" fill="none" stroke="#666" stroke-width="1.3" stroke-linejoin="round" stroke-linecap="round" />
<polyline points="945.4,59.8 950.2,64.6 955,59.8" fill="none" stroke="#666" stroke-width="1.3" stroke-linejoin="round" stroke-linecap="round" />
<polyline points="1036.2,59.8 1041,64.6 1045.8,59.8" fill="none" stroke="#666" stroke-width="1.3" stroke-linejoin="round" stroke-linecap="round" />
<polygon points="44.6,46.3 54.4,41.2 70,50 60.4,55.2" fill="#cfe2f0" stroke="#3b7bb0" stroke-width="1.2" stroke-linejoin="round" />
<polygon points="44.6,46.3 60.4,55.2 60.4,65.3 45,56.9" fill="#9cc3df" stroke="#3b7bb0" stroke-width="1.2" stroke-linejoin="round" />
<polygon points="60.4,55.2 70,50 70,60 60.4,65.3" fill="#b5d3e8" stroke="#3b7bb0" stroke-width="1.2" stroke-linejoin="round" />
<path d="M50 47.5 L54 45.8 L56.5 47.8 L59.5 46.8 L62.5 49.5 L60 52 L56 50.2 L53 51 Z" fill="#fff" stroke="none" stroke-width="0" stroke-linejoin="round" stroke-linecap="round" opacity="0.9"/>
<path d="M62 56.5 L65.5 54.5 L65 58.5 L63 61 Z" fill="#fff" stroke="none" stroke-width="0" stroke-linejoin="round" stroke-linecap="round" opacity="0.85"/>
<path d="M51.5 52.5 L55 54.3 L55.5 58 L52.5 56.5 Z" fill="#fff" stroke="none" stroke-width="0" stroke-linejoin="round" stroke-linecap="round" opacity="0.7"/>
<path d="M151.5 43.8 V51.3 A8.6 3.5 0 0 0 168.7 51.3 V43.8" fill="#9cc3df" stroke="#3b7bb0" stroke-width="1.2" stroke-linejoin="round" stroke-linecap="round" />
<ellipse cx="160.1" cy="43.8" rx="8.6" ry="3.5" fill="#c6ddee" stroke="#3b7bb0" stroke-width="1.2"/>
<polygon points="150.8,48.1 159.2,52.7 150.8,57.3 142.4,52.7" fill="#c6ddee" stroke="#3b7bb0" stroke-width="1.2" stroke-linejoin="round" /><polygon points="142.4,52.7 150.8,57.3 150.8,66.5 142.4,61.9" fill="#8fbcdc" stroke="#3b7bb0" stroke-width="1.2" stroke-linejoin="round" /><polygon points="150.8,57.3 159.2,52.7 159.2,61.9 150.8,66.5" fill="#a9cce4" stroke="#3b7bb0" stroke-width="1.2" stroke-linejoin="round" />
<polygon points="254.3,42.1 264,47.7 254.3,53.3 244.6,47.7" fill="#f8f8f8" stroke="#b4b4b4" stroke-width="1" stroke-linejoin="round" /><polygon points="244.6,47.7 254.3,53.3 254.3,64.5 244.6,58.9" fill="#ededed" stroke="#b4b4b4" stroke-width="1" stroke-linejoin="round" /><polygon points="254.3,53.3 264,47.7 264,58.9 254.3,64.5" fill="#f3f3f3" stroke="#b4b4b4" stroke-width="1" stroke-linejoin="round" /><path d="M244.6 58.9 L254.3 54.1 L264 58.9 M254.3 54.1 L254.3 43.6" fill="none" stroke="#d2d2d2" stroke-width="0.8" stroke-linejoin="round" stroke-linecap="round" />
<polygon points="254.3,53.3 264,47.7 264,58.9 254.3,64.5" fill="#8fbcdc" stroke="#3b7bb0" stroke-width="1" stroke-linejoin="round" />
<circle cx="263.8" cy="61.6" r="5.6" fill="#3474a6" stroke="#fff" stroke-width="1" /><path d="M261.39 59.19 L266.21 64.01 M266.21 59.19 L261.39 64.01" fill="none" stroke="#fff" stroke-width="1.6" stroke-linejoin="round" stroke-linecap="round" />
<polygon points="313.3,42 322.9,47.5 313.3,53 303.7,47.5" fill="#f8f8f8" stroke="#b4b4b4" stroke-width="1" stroke-linejoin="round" /><polygon points="303.7,47.5 313.3,53 313.3,64 303.7,58.5" fill="#ededed" stroke="#b4b4b4" stroke-width="1" stroke-linejoin="round" /><polygon points="313.3,53 322.9,47.5 322.9,58.5 313.3,64" fill="#f3f3f3" stroke="#b4b4b4" stroke-width="1" stroke-linejoin="round" /><path d="M303.7 58.5 L313.3 53.8 L322.9 58.5 M313.3 53.8 L313.3 43.5" fill="none" stroke="#d2d2d2" stroke-width="0.8" stroke-linejoin="round" stroke-linecap="round" />
<polygon points="313.3,53 322.9,47.5 322.9,58.5 313.3,64" fill="#8fbcdc" stroke="#3b7bb0" stroke-width="1" stroke-linejoin="round" />
<line x1="317.5" y1="55.5" x2="324.3" y2="59.4" stroke="#3b7bb0" stroke-width="1.3" />
<polygon points="327.2,61.2 321.2,60.4 324.4,55.6" fill="#3b7bb0" stroke="none" stroke-width="0" stroke-linejoin="round" />
<polygon points="373.5,41.4 382.7,46.6 373.5,51.8 364.3,46.6" fill="#f8f8f8" stroke="#b4b4b4" stroke-width="1" stroke-linejoin="round" /><polygon points="364.3,46.6 373.5,51.8 373.5,62.2 364.3,57" fill="#ededed" stroke="#b4b4b4" stroke-width="1" stroke-linejoin="round" /><polygon points="373.5,51.8 382.7,46.6 382.7,57 373.5,62.2" fill="#f3f3f3" stroke="#b4b4b4" stroke-width="1" stroke-linejoin="round" /><path d="M364.3 57 L373.5 52.6 L382.7 57 M373.5 52.6 L373.5 42.9" fill="none" stroke="#d2d2d2" stroke-width="0.8" stroke-linejoin="round" stroke-linecap="round" />
<polygon points="373.7,50.8 383.2,46 388.7,48.9 379.2,53.7" fill="#c9dfef" stroke="#3b7bb0" stroke-width="1.2" stroke-linejoin="round" />
<polygon points="373.7,50.8 379.2,53.7 379.2,65.5 373.7,62.6" fill="#8fbcdc" stroke="#3b7bb0" stroke-width="1.2" stroke-linejoin="round" />
<polygon points="379.2,53.7 388.7,48.9 388.7,59.9 379.2,65.5" fill="#b3d1e7" stroke="#3b7bb0" stroke-width="1.2" stroke-linejoin="round" />
<polygon points="380.8,55.3 387.1,51.5 387.1,58.5 380.8,63.1" fill="none" stroke="#8fbcdc" stroke-width="0.8" stroke-linejoin="round" />
<polygon points="453.8,42.1 463.5,47.7 453.8,53.3 444.1,47.7" fill="#c9dfef" stroke="#3b7bb0" stroke-width="1.4" stroke-linejoin="round" /><polygon points="444.1,47.7 453.8,53.3 453.8,64.5 444.1,58.9" fill="#a3c7e1" stroke="#3b7bb0" stroke-width="1.4" stroke-linejoin="round" /><polygon points="453.8,53.3 463.5,47.7 463.5,58.9 453.8,64.5" fill="#b3d1e7" stroke="#3b7bb0" stroke-width="1.4" stroke-linejoin="round" />
<circle cx="463" cy="61.6" r="5.6" fill="#3474a6" stroke="#fff" stroke-width="1" /><path d="M460.59 59.19 L465.41 64.01 M465.41 59.19 L460.59 64.01" fill="none" stroke="#fff" stroke-width="1.6" stroke-linejoin="round" stroke-linecap="round" />
<polygon points="504.5,47.5 516.5,53.6 516.5,65.8 504.5,59.7" fill="#dcdcdc" stroke="#bdbdbd" stroke-width="0.8" stroke-linejoin="round" />
<line x1="510.4" y1="46" x2="510.4" y2="63" stroke="#fff" stroke-width="1.3" />
<line x1="504.3" y1="53.4" x2="516.4" y2="59.4" stroke="#fff" stroke-width="1.3" />
<polygon points="516.5,53.6 528.5,47.5 528.5,59.7 516.5,65.8" fill="#8fbcdc" stroke="#3b7bb0" stroke-width="1" stroke-linejoin="round" />
<line x1="516.5" y1="47" x2="516.5" y2="66.6" stroke="#fff" stroke-width="2.2" />
<line x1="516.5" y1="47" x2="516.5" y2="66.8" stroke="#3b7bb0" stroke-width="1.1" stroke-dasharray="2.2 1.4"/>
<rect x="495.5" y="33.5" width="50" height="16" rx="8" fill="#fff" stroke="#e2e2e2" stroke-width="1" />
<polygon points="586.8,41.6 596.4,46.9 586.8,52.2 577.2,46.9" fill="#eeeeee" stroke="#b0b0b0" stroke-width="1.2" stroke-linejoin="round" /><polygon points="577.2,46.9 586.8,52.2 586.8,62.8 577.2,57.5" fill="#e4e4e4" stroke="#b0b0b0" stroke-width="1.2" stroke-linejoin="round" /><polygon points="586.8,52.2 596.4,46.9 596.4,57.5 586.8,62.8" fill="#fbfbfb" stroke="#b0b0b0" stroke-width="1.2" stroke-linejoin="round" />
<circle cx="586.8" cy="46.6" r="0.6" fill="#bbb" stroke="none" stroke-width="1" />
<circle cx="582" cy="54.8" r="0.6" fill="#bbb" stroke="none" stroke-width="1" />
<path d="M592.2 54.2 Q596.6 53.4 601.3 50.1 Q600.6 54.6 602.6 59.2 Q598 60.6 592.9 65.2 Q593.6 59.8 592.2 54.2 Z" fill="#8fbcdc" stroke="#3b7bb0" stroke-width="1.2" stroke-linejoin="round" stroke-linecap="round" />
<polygon points="657.3,45.4 666.4,40.4 675.5,45.4 666.4,50.3" fill="#c9dfef" stroke="#3b7bb0" stroke-width="1.2" stroke-linejoin="round" />
<polygon points="654.7,49.5 664.5,54.7 664.5,64.7 654.7,59.3" fill="#a3c7e1" stroke="#3b7bb0" stroke-width="1.2" stroke-linejoin="round" />
<polygon points="668.4,54.7 678.2,49.5 678.2,59.3 668.4,64.7" fill="#8fbcdc" stroke="#3b7bb0" stroke-width="1.2" stroke-linejoin="round" />
<polygon points="721.1,48.8 735.4,40.6 735.4,58.6 721.1,66.4" fill="#b3d1e7" stroke="#3b7bb0" stroke-width="1.2" stroke-linejoin="round" />
<polygon points="724.2,50.4 732.6,45.6 732.6,56.6 724.2,61.4" fill="#9fc5e0" stroke="#3b7bb0" stroke-width="0.9" stroke-linejoin="round" />
<polygon points="726,52 730.8,49.2 730.8,55.4 726,58.2" fill="#7fb0d6" stroke="#3b7bb0" stroke-width="0.8" stroke-linejoin="round" />
<polygon points="738.8,52.2 745.4,55.9 738.8,59.6 732.2,55.9" fill="#f4f4f4" stroke="#aaa" stroke-width="1" stroke-linejoin="round" /><polygon points="732.2,55.9 738.8,59.6 738.8,67 732.2,63.3" fill="#d6d6d6" stroke="#aaa" stroke-width="1" stroke-linejoin="round" /><polygon points="738.8,59.6 745.4,55.9 745.4,63.3 738.8,67" fill="#e6e6e6" stroke="#aaa" stroke-width="1" stroke-linejoin="round" />
<circle cx="738.8" cy="55.6" r="0.5" fill="#aaa" stroke="none" stroke-width="1" />
<circle cx="735.6" cy="62.2" r="0.5" fill="#aaa" stroke="none" stroke-width="1" />
<circle cx="742" cy="62.2" r="0.5" fill="#aaa" stroke="none" stroke-width="1" />
<polygon points="794.2,39.4 806.8,46.4 794.2,53.4 781.6,46.4" fill="none" stroke="#cfe2f0" stroke-width="1.1" stroke-linejoin="round" /><polygon points="781.6,46.4 794.2,53.4 794.2,67.4 781.6,60.4" fill="none" stroke="#cfe2f0" stroke-width="1.1" stroke-linejoin="round" /><polygon points="794.2,53.4 806.8,46.4 806.8,60.4 794.2,67.4" fill="none" stroke="#cfe2f0" stroke-width="1.1" stroke-linejoin="round" />
<polygon points="794.4,45 801.8,49.2 794.4,53.4 787,49.2" fill="#bcd7ea" stroke="#3b7bb0" stroke-width="1.4" stroke-linejoin="round" /><polygon points="787,49.2 794.4,53.4 794.4,61.8 787,57.6" fill="#8fbcdc" stroke="#3b7bb0" stroke-width="1.4" stroke-linejoin="round" /><polygon points="794.4,53.4 801.8,49.2 801.8,57.6 794.4,61.8" fill="#a3c7e1" stroke="#3b7bb0" stroke-width="1.4" stroke-linejoin="round" />
<polygon points="844.2,48.4 854.6,43.6 857.6,45 857.6,58 847,62.6 844.2,60.4" fill="#e4e4e4" stroke="#b4b4b4" stroke-width="1" stroke-linejoin="round" />
<polygon points="845.8,46.4 862.8,41.4 863.4,59.2 846.5,65.4" fill="#a9cce4" stroke="#3b7bb0" stroke-width="1.1" stroke-linejoin="round" />
<polygon points="849.9,51 858.7,46.9 864.8,49.6 855.3,54.3" fill="#c9dfef" stroke="#3b7bb0" stroke-width="1.1" stroke-linejoin="round" />
<polygon points="849.9,51 855.3,54.3 855.3,65.9 849.9,62.5" fill="#8fbcdc" stroke="#3b7bb0" stroke-width="1.1" stroke-linejoin="round" />
<polygon points="855.3,54.3 864.8,49.6 864.8,60.4 855.3,65.9" fill="#a3c7e1" stroke="#3b7bb0" stroke-width="1.1" stroke-linejoin="round" />
<polygon points="922.7,42.5 932.5,48 922.7,53.5 912.9,48" fill="#c9dfef" stroke="#3b7bb0" stroke-width="1.2" stroke-linejoin="round" /><polygon points="912.9,48 922.7,53.5 922.7,64.5 912.9,59" fill="#a3c7e1" stroke="#3b7bb0" stroke-width="1.2" stroke-linejoin="round" /><polygon points="922.7,53.5 932.5,48 932.5,59 922.7,64.5" fill="#b3d1e7" stroke="#3b7bb0" stroke-width="1.2" stroke-linejoin="round" />
<polygon points="915.9,42.5 925.7,48 915.9,53.5 906.1,48" fill="#c9dfef" stroke="#3b7bb0" stroke-width="1.2" stroke-linejoin="round" /><polygon points="906.1,48 915.9,53.5 915.9,64.5 906.1,59" fill="#a3c7e1" stroke="#3b7bb0" stroke-width="1.2" stroke-linejoin="round" /><polygon points="915.9,53.5 925.7,48 925.7,59 915.9,64.5" fill="#a9cce4" stroke="#3b7bb0" stroke-width="1.2" stroke-linejoin="round" />
<polygon points="919.3,45.6 924.6,48.3 919.3,51 914,48.3" fill="#dbe9f4" stroke="#3b7bb0" stroke-width="0.9" stroke-linejoin="round" />
<rect x="917.4" y="53.6" width="3.6" height="9.6" rx="0" fill="#8fbcdc" stroke="none" stroke-width="0" opacity="0.8"/>
<line x1="921" y1="51.4" x2="921" y2="63.6" stroke="#3b7bb0" stroke-width="0.9" />
<polygon points="1007.3,49.2 1012.9,52.4 1007.3,55.6 1001.7,52.4" fill="#c6ddee" stroke="#3b7bb0" stroke-width="1.1" stroke-linejoin="round" /><polygon points="1001.7,52.4 1007.3,55.6 1007.3,62 1001.7,58.8" fill="#8fbcdc" stroke="#3b7bb0" stroke-width="1.1" stroke-linejoin="round" /><polygon points="1007.3,55.6 1012.9,52.4 1012.9,58.8 1007.3,62" fill="#a9cce4" stroke="#3b7bb0" stroke-width="1.1" stroke-linejoin="round" />
<line x1="1007.3" y1="49" x2="1007.3" y2="43.6" stroke="#3b7bb0" stroke-width="1.1" />
<polyline points="1004.6,46 1007.3,43.2 1010,46" fill="none" stroke="#3b7bb0" stroke-width="1.1" stroke-linejoin="round" stroke-linecap="round" />
<path d="M1001 57.8 L997.6 59.8 M997.4 57.6 L997.4 60.1 L1000 60.6 M999 61.6 Q1002.5 63.4 1005 62.4" fill="none" stroke="#8fbcdc" stroke-width="1" stroke-linejoin="round" stroke-linecap="round" />
<path d="M1013.6 57.8 L1017 59.8 M1017.2 57.6 L1017.2 60.1 L1014.6 60.6 M1015.6 61.6 Q1012.1 63.4 1009.6 62.4" fill="none" stroke="#8fbcdc" stroke-width="1" stroke-linejoin="round" stroke-linecap="round" />
<polygon points="1092.5,41.1 1103.7,47.3 1092.5,53.5 1081.3,47.3" fill="#d3e4f1" stroke="#3b7bb0" stroke-width="1.5" stroke-linejoin="round" /><polygon points="1081.3,47.3 1092.5,53.5 1092.5,65.9 1081.3,59.7" fill="#b9d5e9" stroke="#3b7bb0" stroke-width="1.5" stroke-linejoin="round" /><polygon points="1092.5,53.5 1103.7,47.3 1103.7,59.7 1092.5,65.9" fill="#c3dbec" stroke="#3b7bb0" stroke-width="1.5" stroke-linejoin="round" />
<polygon points="1092.5,45.2 1097.6,47.9 1092.5,50.6 1087.4,47.9" fill="#fff" stroke="none" stroke-width="0" stroke-linejoin="round" opacity="0.85"/>
<polygon points="1095.6,56.4 1100.4,53.8 1100.4,59.4 1095.6,62" fill="#fff" stroke="none" stroke-width="0" stroke-linejoin="round" opacity="0.75"/>
<polygon points="1084.6,54.2 1089.2,56.8 1089.2,62 1084.6,59.4" fill="#fff" stroke="none" stroke-width="0" stroke-linejoin="round" opacity="0.6"/>
<polygon points="1153.3,42.1 1163.1,47.7 1153.3,53.3 1143.5,47.7" fill="#a9cce4" stroke="#3b7bb0" stroke-width="1.2" stroke-linejoin="round" /><polygon points="1143.5,47.7 1153.3,53.3 1153.3,64.5 1143.5,58.9" fill="#8fbcdc" stroke="#3b7bb0" stroke-width="1.2" stroke-linejoin="round" /><polygon points="1153.3,53.3 1163.1,47.7 1163.1,58.9 1153.3,64.5" fill="#9cc3df" stroke="#3b7bb0" stroke-width="1.2" stroke-linejoin="round" />
<path d="M1143.5 47.7 L1163.1 47.7 M1153.3 42.1 L1153.3 53.3 M1143.5 47.7 L1153.3 64.5 M1153.3 53.3 L1143.5 58.9 M1153.3 53.3 L1163.1 58.9 M1163.1 47.7 L1153.3 64.5" fill="none" stroke="#3b7bb0" stroke-width="0.8" stroke-linejoin="round" stroke-linecap="round" />
<rect x="1254" y="43.5" width="12" height="12" rx="1.2" fill="#fff" stroke="#3b7bb0" stroke-width="1.5" />
<rect x="1245.4" y="47.4" width="16.4" height="15.8" rx="1.2" fill="#fff" stroke="#3b7bb0" stroke-width="1.5" />
<polygon points="1334.2,57 1349.2,48.4 1356.7,51.9 1341.7,60.5" fill="#f1f1f1" stroke="#c2c2c2" stroke-width="1" stroke-linejoin="round" />
<polygon points="1334.2,57 1341.7,60.5 1341.7,67.4 1334.2,63.7" fill="#d2d2d2" stroke="#c2c2c2" stroke-width="1" stroke-linejoin="round" />
<polygon points="1341.7,60.5 1356.7,51.9 1356.7,58.8 1341.7,67.4" fill="#e4e4e4" stroke="#c2c2c2" stroke-width="1" stroke-linejoin="round" />
<circle cx="1337.6" cy="61.6" r="0.6" fill="#aaa" stroke="none" stroke-width="1" />
<circle cx="1352.8" cy="58" r="0.6" fill="#aaa" stroke="none" stroke-width="1" />
<circle cx="1350.5" cy="51.5" r="0.6" fill="#bbb" stroke="none" stroke-width="1" />
<polygon points="1340,39 1347.3,43.1 1340,47.2 1332.7,43.1" fill="#b9d5e9" stroke="#3b7bb0" stroke-width="1.3" stroke-linejoin="round" /><polygon points="1332.7,43.1 1340,47.2 1340,55.4 1332.7,51.3" fill="#7fb0d6" stroke="#3b7bb0" stroke-width="1.3" stroke-linejoin="round" /><polygon points="1340,47.2 1347.3,43.1 1347.3,51.3 1340,55.4" fill="#9fc5e0" stroke="#3b7bb0" stroke-width="1.3" stroke-linejoin="round" />
<rect x="1418.6" y="45.4" width="16" height="16.2" rx="0" fill="#cde0ec" stroke="none" stroke-width="0" />
<line x1="1418.3" y1="44.8" x2="1418.3" y2="62.2" stroke="#3b7bb0" stroke-width="1.5" stroke-linecap="round"/>
<line x1="1434.7" y1="44.8" x2="1434.7" y2="62.2" stroke="#3b7bb0" stroke-width="1.5" stroke-linecap="round"/>
<path d="M1420.6 53.5 H1432.6 M1423.6 50.4 L1420.5 53.5 L1423.6 56.6 M1429.6 50.4 L1432.7 53.5 L1429.6 56.6" fill="none" stroke="#3b7bb0" stroke-width="1.2" stroke-linejoin="round" stroke-linecap="round" />
<rect x="1500.9" y="43.5" width="11.4" height="11.4" rx="1.2" fill="#fff" stroke="#3b7bb0" stroke-width="1.4" />
<rect x="1492.8" y="47.9" width="15.4" height="15.2" rx="1.2" fill="none" stroke="#3b7bb0" stroke-width="1.4" />
<rect x="1501.6" y="48.6" width="5.9" height="6.3" rx="0" fill="#cde0ec" stroke="none" stroke-width="0" />
<rect x="338.2" y="129" width="6.5" height="743" rx="3.2" fill="#d6d6d6" stroke="none" stroke-width="0" />
<polygon points="337.6,123.4 344.8,123.4 341.2,118" fill="#d6d6d6" stroke="none" stroke-width="1" stroke-linejoin="round" />
<polygon points="337.6,885.6 344.8,885.6 341.2,891" fill="#d6d6d6" stroke="none" stroke-width="1" stroke-linejoin="round" />
<path d="M31.6 129 H38.6 L43.4 133.8 V145.4 Q43.4 147 41.8 147 H31.6 Q30 147 30 145.4 V130.6 Q30 129 31.6 129 Z" fill="#ababab" stroke="none" stroke-width="1" stroke-linejoin="round" stroke-linecap="round" />
<polygon points="38.6,129 43.4,133.8 38.6,133.8" fill="#3c3c3c" stroke="none" stroke-width="1" stroke-linejoin="round" />
<polyline points="30.7,185.6 36.7,191.8 42.7,185.6" fill="none" stroke="#555" stroke-width="1.3" stroke-linejoin="round" stroke-linecap="round" />
<polygon points="69.4,178.6 74.4,181.3 69.4,184 64.4,181.3" fill="#ececec" stroke="none" stroke-width="0" stroke-linejoin="round" /><polygon points="64.4,181.3 69.4,184 69.4,189.4 64.4,186.7" fill="#9c9c9c" stroke="none" stroke-width="0" stroke-linejoin="round" /><polygon points="69.4,184 74.4,181.3 74.4,186.7 69.4,189.4" fill="#cacaca" stroke="none" stroke-width="0" stroke-linejoin="round" /><polygon points="64.3,187.2 69.3,189.9 64.3,192.6 59.3,189.9" fill="#ececec" stroke="none" stroke-width="0" stroke-linejoin="round" /><polygon points="59.3,189.9 64.3,192.6 64.3,198 59.3,195.3" fill="#9c9c9c" stroke="none" stroke-width="0" stroke-linejoin="round" /><polygon points="64.3,192.6 69.3,189.9 69.3,195.3 64.3,198" fill="#cacaca" stroke="none" stroke-width="0" stroke-linejoin="round" /><polygon points="74.5,187.2 79.5,189.9 74.5,192.6 69.5,189.9" fill="#ececec" stroke="none" stroke-width="0" stroke-linejoin="round" /><polygon points="69.5,189.9 74.5,192.6 74.5,198 69.5,195.3" fill="#9c9c9c" stroke="none" stroke-width="0" stroke-linejoin="round" /><polygon points="74.5,192.6 79.5,189.9 79.5,195.3 74.5,198" fill="#cacaca" stroke="none" stroke-width="0" stroke-linejoin="round" />
<circle cx="308.3" cy="188.4" r="10" fill="#fff" stroke="#d9d9e3" stroke-width="1" /><path d="M305.3 188.4 H311.3 M308.3 185.4 V191.4" fill="none" stroke="#444" stroke-width="1.5" stroke-linejoin="round" stroke-linecap="round" stroke-linecap="butt"/>
<line x1="37.5" y1="213.5" x2="37.5" y2="225" stroke="#d0d6da" stroke-width="1" />
<rect x="29.4" y="224.8" width="14.4" height="15.2" rx="0" fill="#fff" stroke="#dedede" stroke-width="1" /><line x1="33.4" y1="232.4" x2="39.8" y2="232.4" stroke="#444" stroke-width="1.6" />
<polygon points="68.63,225.72 73.25,223.2 77.87,225.72 73.25,228.24" fill="#ececec" stroke="none" stroke-width="1" stroke-linejoin="round" /><polygon points="68.63,225.72 73.25,228.24 73.25,240 68.63,237.48" fill="#9c9c9c" stroke="none" stroke-width="1" stroke-linejoin="round" /><polygon points="73.25,228.24 77.87,225.72 77.87,237.27 73.25,240" fill="#cacaca" stroke="none" stroke-width="1" stroke-linejoin="round" /><polygon points="61.7,234.33 66.32,231.81 70.94,234.33 66.32,236.85" fill="#ececec" stroke="none" stroke-width="1" stroke-linejoin="round" /><polygon points="61.7,234.33 66.32,236.85 66.32,242.31 61.7,239.79" fill="#9c9c9c" stroke="none" stroke-width="1" stroke-linejoin="round" /><polygon points="66.32,236.85 70.94,234.33 73.25,235.59 73.25,240 66.32,242.31" fill="#cacaca" stroke="none" stroke-width="1" stroke-linejoin="round" />
<line x1="70.5" y1="251.5" x2="70.5" y2="387.3" stroke="#e0e0e0" stroke-width="1" />
<line x1="70.5" y1="271.9" x2="77" y2="271.9" stroke="#e0e0e0" stroke-width="1" />
<line x1="70.5" y1="310.4" x2="77" y2="310.4" stroke="#e0e0e0" stroke-width="1" />
<line x1="70.5" y1="348.8" x2="77" y2="348.8" stroke="#e0e0e0" stroke-width="1" />
<line x1="70.5" y1="387.3" x2="77" y2="387.3" stroke="#e0e0e0" stroke-width="1" />
<polygon points="101.6,261.2 109.4,265.7 101.6,270.2 93.8,265.7" fill="#ededed" stroke="#b8b8b8" stroke-width="0.9" stroke-linejoin="round" /><polygon points="93.8,265.7 101.6,270.2 101.6,279.2 93.8,274.7" fill="#e4e4e4" stroke="#b8b8b8" stroke-width="0.9" stroke-linejoin="round" /><polygon points="101.6,270.2 109.4,265.7 109.4,274.7 101.6,279.2" fill="#ececec" stroke="#b8b8b8" stroke-width="0.9" stroke-linejoin="round" />
<polygon points="101.6,270.2 109.4,265.7 109.4,274.7 101.6,279.2" fill="#8fbcdc" stroke="#3b7bb0" stroke-width="0.9" stroke-linejoin="round" />
<circle cx="109.6" cy="277.8" r="4.7" fill="#3474a6" stroke="#fff" stroke-width="0.8" /><path d="M107.72 275.92 L111.48 279.68 M111.48 275.92 L107.72 279.68" fill="none" stroke="#fff" stroke-width="1" stroke-linejoin="round" stroke-linecap="round" />
<polygon points="102.8,297.9 113.4,303.8 102.8,309.7 92.2,303.8" fill="none" stroke="#d3e4f1" stroke-width="1" stroke-linejoin="round" /><polygon points="92.2,303.8 102.8,309.7 102.8,321.5 92.2,315.6" fill="none" stroke="#d3e4f1" stroke-width="1" stroke-linejoin="round" /><polygon points="102.8,309.7 113.4,303.8 113.4,315.6 102.8,321.5" fill="none" stroke="#d3e4f1" stroke-width="1" stroke-linejoin="round" />
<polygon points="102.6,302.9 108.8,306.4 102.6,309.9 96.4,306.4" fill="#bcd7ea" stroke="#3b7bb0" stroke-width="1.3" stroke-linejoin="round" /><polygon points="96.4,306.4 102.6,309.9 102.6,316.9 96.4,313.4" fill="#8fbcdc" stroke="#3b7bb0" stroke-width="1.3" stroke-linejoin="round" /><polygon points="102.6,309.9 108.8,306.4 108.8,313.4 102.6,316.9" fill="#a3c7e1" stroke="#3b7bb0" stroke-width="1.3" stroke-linejoin="round" />
<polygon points="92.1,342 100.8,337.4 113.6,345 104.9,349.6" fill="#cfe2f0" stroke="#3b7bb0" stroke-width="1.1" stroke-linejoin="round" />
<polygon points="92.1,342 104.9,349.6 104.9,358 92.1,350.2" fill="#9cc3df" stroke="#3b7bb0" stroke-width="1.1" stroke-linejoin="round" />
<polygon points="104.9,349.6 113.6,345 113.6,353.4 104.9,358" fill="#b5d3e8" stroke="#3b7bb0" stroke-width="1.1" stroke-linejoin="round" />
<rect x="99.4" y="347.5" width="3.6" height="4.6" rx="0" fill="#d9d9d9" stroke="#b9b9b9" stroke-width="0.6" />
<polygon points="101.6,376.9 109.4,381.4 101.6,385.9 93.8,381.4" fill="#c6ddee" stroke="#3b7bb0" stroke-width="1" stroke-linejoin="round" /><polygon points="93.8,381.4 101.6,385.9 101.6,394.9 93.8,390.4" fill="#8fbcdc" stroke="#3b7bb0" stroke-width="1" stroke-linejoin="round" /><polygon points="101.6,385.9 109.4,381.4 109.4,390.4 101.6,394.9" fill="#a9cce4" stroke="#3b7bb0" stroke-width="1" stroke-linejoin="round" />
<circle cx="109.6" cy="393.6" r="4.7" fill="#3474a6" stroke="#fff" stroke-width="0.8" /><path d="M107.72 391.72 L111.48 395.48 M111.48 391.72 L107.72 395.48" fill="none" stroke="#fff" stroke-width="1" stroke-linejoin="round" stroke-linecap="round" />
<polyline points="30.7,438.2 36.7,444.4 42.7,438.2" fill="none" stroke="#555" stroke-width="1.3" stroke-linejoin="round" stroke-linecap="round" />
<polygon points="69.4,431.6 74.4,434.3 69.4,437 64.4,434.3" fill="#d8d23a" stroke="none" stroke-width="0" stroke-linejoin="round" /><polygon points="64.4,434.3 69.4,437 69.4,442.4 64.4,439.7" fill="#2f6fb3" stroke="none" stroke-width="0" stroke-linejoin="round" /><polygon points="69.4,437 74.4,434.3 74.4,439.7 69.4,442.4" fill="#4fa04a" stroke="none" stroke-width="0" stroke-linejoin="round" /><polygon points="64.3,440.2 69.3,442.9 64.3,445.6 59.3,442.9" fill="#d8d23a" stroke="none" stroke-width="0" stroke-linejoin="round" /><polygon points="59.3,442.9 64.3,445.6 64.3,451 59.3,448.3" fill="#2f6fb3" stroke="none" stroke-width="0" stroke-linejoin="round" /><polygon points="64.3,445.6 69.3,442.9 69.3,448.3 64.3,451" fill="#4fa04a" stroke="none" stroke-width="0" stroke-linejoin="round" /><polygon points="74.5,440.2 79.5,442.9 74.5,445.6 69.5,442.9" fill="#d8d23a" stroke="none" stroke-width="0" stroke-linejoin="round" /><polygon points="69.5,442.9 74.5,445.6 74.5,451 69.5,448.3" fill="#2f6fb3" stroke="none" stroke-width="0" stroke-linejoin="round" /><polygon points="74.5,445.6 79.5,442.9 79.5,448.3 74.5,451" fill="#4fa04a" stroke="none" stroke-width="0" stroke-linejoin="round" />
<circle cx="308.3" cy="441.4" r="10" fill="#fff" stroke="#d9d9e3" stroke-width="1" /><path d="M305.3 441.4 H311.3 M308.3 438.4 V444.4" fill="none" stroke="#444" stroke-width="1.5" stroke-linejoin="round" stroke-linecap="round" stroke-linecap="butt"/>
<line x1="37.5" y1="468" x2="37.5" y2="478" stroke="#dedede" stroke-width="1" />
<rect x="29.2" y="477.7" width="14.4" height="15.2" rx="0" fill="#fff" stroke="#dedede" stroke-width="1" /><line x1="33.2" y1="485.3" x2="39.6" y2="485.3" stroke="#444" stroke-width="1.6" />
<path d="M60.6 480 H76 M58.2 485.2 H73.2 M65.6 490.4 H81" fill="none" stroke="#8a8a8a" stroke-width="1.2" stroke-linejoin="round" stroke-linecap="round" stroke-linecap="butt"/>
<line x1="70.5" y1="549" x2="70.5" y2="871.6" stroke="#e0e0e0" stroke-width="1" />
<line x1="70.5" y1="563.2" x2="77" y2="563.2" stroke="#e0e0e0" stroke-width="1" />
<line x1="70.5" y1="640.1" x2="77" y2="640.1" stroke="#e0e0e0" stroke-width="1" />
<line x1="70.5" y1="717.2" x2="77" y2="717.2" stroke="#e0e0e0" stroke-width="1" />
<line x1="70.5" y1="755.6" x2="77" y2="755.6" stroke="#e0e0e0" stroke-width="1" />
<line x1="70.5" y1="871.2" x2="77" y2="871.2" stroke="#e0e0e0" stroke-width="1" />
<rect x="70.37" y="501.47" width="263.26" height="44.86" rx="0" fill="#fff" stroke="#4a84e2" stroke-width="4.74" />
<line x1="72.6" y1="524.9" x2="77" y2="524.9" stroke="#e0e0e0" stroke-width="1" />
<polygon points="101.43,517.45 105.92,515 110.41,517.45 105.92,519.9" fill="#ececec" stroke="none" stroke-width="1" stroke-linejoin="round" /><polygon points="101.43,517.45 105.92,519.9 105.92,531.32 101.43,528.87" fill="#9c9c9c" stroke="none" stroke-width="1" stroke-linejoin="round" /><polygon points="105.92,519.9 110.41,517.45 110.41,528.67 105.92,531.32" fill="#cacaca" stroke="none" stroke-width="1" stroke-linejoin="round" /><polygon points="94.7,525.81 99.19,523.36 103.68,525.81 99.19,528.26" fill="#ececec" stroke="none" stroke-width="1" stroke-linejoin="round" /><polygon points="94.7,525.81 99.19,528.26 99.19,533.56 94.7,531.12" fill="#9c9c9c" stroke="none" stroke-width="1" stroke-linejoin="round" /><polygon points="99.19,528.26 103.68,525.81 105.92,527.04 105.92,531.32 99.19,533.56" fill="#cacaca" stroke="none" stroke-width="1" stroke-linejoin="round" />
<circle cx="112.8" cy="533.6" r="5.7" fill="#c9a227" stroke="none" stroke-width="1" />
<path d="M112.8 530.2 V534.4" fill="none" stroke="#fff" stroke-width="1.7" stroke-linejoin="round" stroke-linecap="round" stroke-linecap="butt"/>
<circle cx="112.8" cy="536.5" r="0.95" fill="#fff" stroke="none" stroke-width="1" />
<path d="M209 522.6 A7.4 7.4 0 0 1 222.4 520.6 M223.2 526.2 A7.4 7.4 0 0 1 209.8 528.2" fill="none" stroke="#3474a6" stroke-width="1.7" stroke-linejoin="round" stroke-linecap="round" />
<polyline points="222.9,516.8 222.9,521.2 218.5,521.2" fill="none" stroke="#3474a6" stroke-width="1.7" stroke-linejoin="round" stroke-linecap="round" />
<polyline points="209.3,532 209.3,527.6 213.7,527.6" fill="none" stroke="#3474a6" stroke-width="1.7" stroke-linejoin="round" stroke-linecap="round" />
<circle cx="102.4" cy="562.5" r="6.1" fill="#fff" stroke="#d4243c" stroke-width="4" />
<circle cx="308.3" cy="562.5" r="10" fill="#fff" stroke="#d9d9e3" stroke-width="1" /><path d="M305.3 562.5 H311.3 M308.3 559.5 V565.5" fill="none" stroke="#444" stroke-width="1.5" stroke-linejoin="round" stroke-linecap="round" stroke-linecap="butt"/>
<rect x="62.2" y="593.2" width="14.4" height="15.2" rx="0" fill="#fff" stroke="#dedede" stroke-width="1" /><line x1="66.2" y1="600.8" x2="72.6" y2="600.8" stroke="#444" stroke-width="1" /><line x1="69.4" y1="597.6" x2="69.4" y2="604" stroke="#444" stroke-width="1" />
<circle cx="102.4" cy="601.4" r="8" fill="#2f8038" stroke="none" stroke-width="1" /><polyline points="98.8,601.6 101.4,604.3 106.3,598.8" fill="none" stroke="#fff" stroke-width="2.1" stroke-linejoin="round" stroke-linecap="round" />
<circle cx="102.4" cy="639.5" r="6.1" fill="#fff" stroke="#d4243c" stroke-width="4" />
<circle cx="308.3" cy="639.5" r="10" fill="#fff" stroke="#d9d9e3" stroke-width="1" /><path d="M305.3 639.5 H311.3 M308.3 636.5 V642.5" fill="none" stroke="#444" stroke-width="1.5" stroke-linejoin="round" stroke-linecap="round" stroke-linecap="butt"/>
<rect x="62.2" y="670.4" width="14.4" height="15.2" rx="0" fill="#fff" stroke="#dedede" stroke-width="1" /><line x1="66.2" y1="678" x2="72.6" y2="678" stroke="#444" stroke-width="1" /><line x1="69.4" y1="674.8" x2="69.4" y2="681.2" stroke="#444" stroke-width="1" />
<circle cx="102.4" cy="716.6" r="8" fill="#2f8038" stroke="none" stroke-width="1" /><polyline points="98.8,716.8 101.4,719.5 106.3,714" fill="none" stroke="#fff" stroke-width="2.1" stroke-linejoin="round" stroke-linecap="round" />
<circle cx="102.4" cy="755" r="8" fill="#2f8038" stroke="none" stroke-width="1" /><polyline points="98.8,755.2 101.4,757.9 106.3,752.4" fill="none" stroke="#fff" stroke-width="2.1" stroke-linejoin="round" stroke-linecap="round" />
<rect x="62.2" y="785.6" width="14.4" height="15.2" rx="0" fill="#fff" stroke="#dedede" stroke-width="1" /><line x1="66.2" y1="793.2" x2="72.6" y2="793.2" stroke="#444" stroke-width="1" /><line x1="69.4" y1="790" x2="69.4" y2="796.4" stroke="#444" stroke-width="1" />
<rect x="62.2" y="824.2" width="14.4" height="15.2" rx="0" fill="#fff" stroke="#dedede" stroke-width="1" /><line x1="66.2" y1="831.8" x2="72.6" y2="831.8" stroke="#444" stroke-width="1" /><line x1="69.4" y1="828.6" x2="69.4" y2="835" stroke="#444" stroke-width="1" />
<polygon points="101.3,826 105.7,823.6 110.1,826 110.1,837 105.7,839.6 99.1,841.8 94.7,839.4 94.7,834.2 99.1,831.8 101.3,833" fill="none" stroke="#444" stroke-width="1.1" stroke-linejoin="round" /><polyline points="101.3,826 105.7,828.4 110.1,826" fill="none" stroke="#444" stroke-width="1.1" stroke-linejoin="round" stroke-linecap="round" /><polyline points="105.7,828.4 105.7,839.6" fill="none" stroke="#444" stroke-width="1.1" stroke-linejoin="round" stroke-linecap="round" /><polyline points="94.7,834.2 99.1,836.6 103.5,834.2 101.3,833" fill="none" stroke="#444" stroke-width="1.1" stroke-linejoin="round" stroke-linecap="round" /><polyline points="99.1,836.6 99.1,841.8" fill="none" stroke="#444" stroke-width="1.1" stroke-linejoin="round" stroke-linecap="round" /><polyline points="103.5,834.2 105.7,835.4" fill="none" stroke="#444" stroke-width="1.1" stroke-linejoin="round" stroke-linecap="round" />
<circle cx="112.9" cy="842.2" r="4.3" fill="#fff" stroke="#3474a6" stroke-width="2.7" />
<circle cx="102.4" cy="870.5" r="6.1" fill="#fff" stroke="#d4243c" stroke-width="4" />
<circle cx="308.3" cy="870.6" r="10" fill="#fff" stroke="#d9d9e3" stroke-width="1" /><path d="M305.3 870.6 H311.3 M308.3 867.6 V873.6" fill="none" stroke="#444" stroke-width="1.5" stroke-linejoin="round" stroke-linecap="round" stroke-linecap="butt"/>
</svg>
<span class="t" style="left:940.14px;top:937px;font-size:16px;line-height:21px;font-weight:400;color:#555;transform:scaleX(1.1719);">10 m</span>
<span class="t" style="left:26.25px;top:912px;font-size:20px;line-height:26px;font-weight:400;-webkit-text-stroke:0.7px #2b2b2b;color:#2b2b2b;transform:scaleX(1.0365);">Job status</span>
<span class="t" style="left:384.26px;top:132px;font-size:20.5px;line-height:27px;font-weight:400;-webkit-text-stroke:0.7px #2b2b2b;color:#2b2b2b;transform:scaleX(1.0236);">Vehicle</span>
<span class="t" style="left:405.09px;top:196px;font-size:18.5px;line-height:25px;font-weight:400;-webkit-text-stroke:0.7px #2b2b2b;color:#2b2b2b;transform:scaleX(1.0100);">Geometry Info</span>
<span class="t" style="left:669.11px;top:263px;font-size:18.5px;line-height:25px;font-weight:400;-webkit-text-stroke:0.7px #fff;color:#fff;transform:scaleX(0.9733);">Create Simulation</span>
<span class="t" style="left:1629.29px;top:127px;font-size:18.5px;line-height:25px;font-weight:400;-webkit-text-stroke:0.7px #2b2b2b;color:#2b2b2b;transform:scaleX(0.9230);">GEOMETRY</span>
<span class="t" style="left:1630.07px;top:171px;font-size:18.5px;line-height:25px;font-weight:700;color:#2b2b2b;transform:scaleX(0.9222);">Vehicle</span>
<span class="t" style="left:1695.53px;top:210px;font-size:18px;line-height:24px;font-weight:400;color:#2b2b2b;transform:scaleX(1.0124);">Flow region</span>
<span class="t" style="left:1596.55px;top:264px;font-size:18.5px;line-height:25px;font-weight:400;-webkit-text-stroke:0.7px #9a9a9a;color:#9a9a9a;transform:scaleX(0.9094);">SAVED SELECTIONS</span>
<span class="t" style="left:1601.48px;top:315px;font-size:18px;line-height:24px;font-weight:400;color:#2b2b2b;transform:scaleX(0.9578);">Show faces</span>
<span class="t" style="left:85.06px;top:9px;font-size:14px;line-height:20px;font-weight:400;color:#555;transform:scaleX(0.9266);">CREATE</span>
<span class="t" style="left:299.59px;top:9px;font-size:14px;line-height:20px;font-weight:400;color:#555;transform:scaleX(0.9281);">FACE</span>
<span class="t" style="left:784.78px;top:9px;font-size:14px;line-height:20px;font-weight:400;color:#555;transform:scaleX(0.9737);">BODY</span>
<span class="t" style="left:1265px;top:9px;font-size:14px;line-height:20px;font-weight:400;color:#555;transform:scaleX(1.0000);">MODEL</span>
<span class="t" style="left:1450.52px;top:9px;font-size:14px;line-height:20px;font-weight:400;color:#555;transform:scaleX(0.9351);">TOOLS</span>
<span class="t" style="left:23.5px;top:70px;font-size:12.5px;line-height:18px;font-weight:400;color:#333;transform:scaleX(1.0000);">Flow volume</span>
<span class="t" style="left:127.99px;top:70px;font-size:12.5px;line-height:18px;font-weight:400;color:#333;transform:scaleX(1.0095);">Primitives</span>
<span class="t" style="left:236.73px;top:70px;font-size:12.5px;line-height:18px;font-weight:400;color:#333;transform:scaleX(1.0217);">Delete</span>
<span class="t" style="left:300.23px;top:70px;font-size:12.5px;line-height:18px;font-weight:400;color:#333;transform:scaleX(1.0172);">Move</span>
<span class="t" style="left:354.98px;top:70px;font-size:12.5px;line-height:18px;font-weight:400;color:#333;transform:scaleX(1.0181);">Extrude</span>
<span class="t" style="left:436.13px;top:70px;font-size:12.5px;line-height:18px;font-weight:400;color:#333;transform:scaleX(1.0246);">Delete</span>
<span class="t" style="left:494px;top:70px;font-size:12.5px;line-height:18px;font-weight:400;color:#333;transform:scaleX(1.0000);">Improve</span>
<span class="t" style="left:557.02px;top:70px;font-size:12.5px;line-height:18px;font-weight:400;color:#333;transform:scaleX(0.9689);">Close sheet</span>
<span class="t" style="left:638.5px;top:70px;font-size:12.5px;line-height:18px;font-weight:400;color:#333;transform:scaleX(1.0000);">Facet split</span>
<span class="t" style="left:713.69px;top:70px;font-size:12.5px;line-height:18px;font-weight:400;color:#333;transform:scaleX(1.0473);">Imprint</span>
<span class="t" style="left:779.55px;top:70px;font-size:12.5px;line-height:18px;font-weight:400;color:#333;transform:scaleX(0.9333);">Scale</span>
<span class="t" style="left:841.73px;top:70px;font-size:12.5px;line-height:18px;font-weight:400;color:#333;transform:scaleX(1.0319);">Split</span>
<span class="t" style="left:897.27px;top:70px;font-size:12.5px;line-height:18px;font-weight:400;color:#333;transform:scaleX(0.9830);">Boolean</span>
<span class="t" style="left:980px;top:70px;font-size:12.5px;line-height:18px;font-weight:400;color:#333;transform:scaleX(0.9865);">Transform</span>
<span class="t" style="left:1069.75px;top:70px;font-size:12.5px;line-height:18px;font-weight:400;color:#333;transform:scaleX(1.0000);">Simplify</span>
<span class="t" style="left:1138.25px;top:70px;font-size:12.5px;line-height:18px;font-weight:400;color:#333;transform:scaleX(1.0345);">Wrap</span>
<span class="t" style="left:1209.25px;top:70px;font-size:12.5px;line-height:18px;font-weight:400;color:#333;transform:scaleX(1.0028);">Fix interferences</span>
<span class="t" style="left:1320px;top:70px;font-size:12.5px;line-height:18px;font-weight:400;color:#333;transform:scaleX(0.9851);">Add CAD</span>
<span class="t" style="left:1412.03px;top:70px;font-size:12.5px;line-height:18px;font-weight:400;color:#333;transform:scaleX(0.9483);">Gaps</span>
<span class="t" style="left:1465.74px;top:70px;font-size:12.5px;line-height:18px;font-weight:400;color:#333;transform:scaleX(1.0105);">Interferences</span>
<span class="t" style="left:502px;top:33px;font-size:11px;line-height:16px;font-weight:400;color:#555;transform:scaleX(1.0139);z-index:3;">ALPHA</span>
<span class="t" style="left:56.08px;top:127px;font-size:18.5px;line-height:25px;font-weight:400;-webkit-text-stroke:0.7px #222;color:#222;transform:scaleX(0.9249);">UPLOADED FILES (0)</span>
<span class="t" style="left:88.94px;top:175px;font-size:18.5px;line-height:25px;font-weight:400;-webkit-text-stroke:0.7px #222;color:#222;transform:scaleX(0.9129);">GEOMETRIES</span>
<span class="t" style="left:89.15px;top:221px;font-size:18px;line-height:24px;font-weight:400;color:#2b2b2b;transform:scaleX(0.9912);">Vehicle</span>
<span class="t" style="left:122.08px;top:260px;font-size:18px;line-height:24px;font-weight:400;color:#2b2b2b;transform:scaleX(0.9813);">Delete faces</span>
<span class="t" style="left:122.12px;top:298px;font-size:18px;line-height:24px;font-weight:400;color:#2b2b2b;transform:scaleX(0.9103);">Scale</span>
<span class="t" style="left:122.03px;top:337px;font-size:18px;line-height:24px;font-weight:400;color:#2b2b2b;transform:scaleX(1.0124);">External flow volume</span>
<span class="t" style="left:122.06px;top:375px;font-size:18px;line-height:24px;font-weight:400;color:#2b2b2b;transform:scaleX(0.9911);">Delete bodies</span>
<span class="t" style="left:88.92px;top:429px;font-size:18.5px;line-height:25px;font-weight:400;-webkit-text-stroke:0.7px #222;color:#222;transform:scaleX(0.9622);">SIMULATIONS</span>
<span class="t" style="left:89.03px;top:474px;font-size:18px;line-height:24px;font-weight:400;color:#2b2b2b;transform:scaleX(0.9844);">Incompressible</span>
<span class="t" style="left:121.8px;top:513px;font-size:18px;line-height:24px;font-weight:400;color:#2b2b2b;transform:scaleX(0.9974);">Geometry</span>
<span class="t" style="left:122.01px;top:551px;font-size:18px;line-height:24px;font-weight:400;color:#2b2b2b;transform:scaleX(1.0283);">Materials</span>
<span class="t" style="left:121.75px;top:590px;font-size:18px;line-height:24px;font-weight:400;color:#2b2b2b;transform:scaleX(1.0278);">Initial conditions</span>
<span class="t" style="left:122.05px;top:628px;font-size:18px;line-height:24px;font-weight:400;color:#2b2b2b;transform:scaleX(1.0003);">Boundary conditions</span>
<span class="t" style="left:89.4px;top:667px;font-size:18px;line-height:24px;font-weight:400;color:#2b2b2b;transform:scaleX(0.9716);">Advanced concepts</span>
<span class="t" style="left:122.06px;top:705px;font-size:18px;line-height:24px;font-weight:400;color:#2b2b2b;transform:scaleX(0.9946);">Numerics</span>
<span class="t" style="left:122.04px;top:744px;font-size:18px;line-height:24px;font-weight:400;color:#2b2b2b;transform:scaleX(1.0194);">Simulation control</span>
<span class="t" style="left:88.62px;top:782px;font-size:18px;line-height:24px;font-weight:400;color:#2b2b2b;transform:scaleX(1.0217);">Result control</span>
<span class="t" style="left:122.04px;top:821px;font-size:18px;line-height:24px;font-weight:400;color:#2b2b2b;transform:scaleX(1.0048);">Mesh</span>
<span class="t" style="left:122.05px;top:859px;font-size:18px;line-height:24px;font-weight:400;color:#2b2b2b;transform:scaleX(0.9950);">Simulation runs</span>
</body></html>
